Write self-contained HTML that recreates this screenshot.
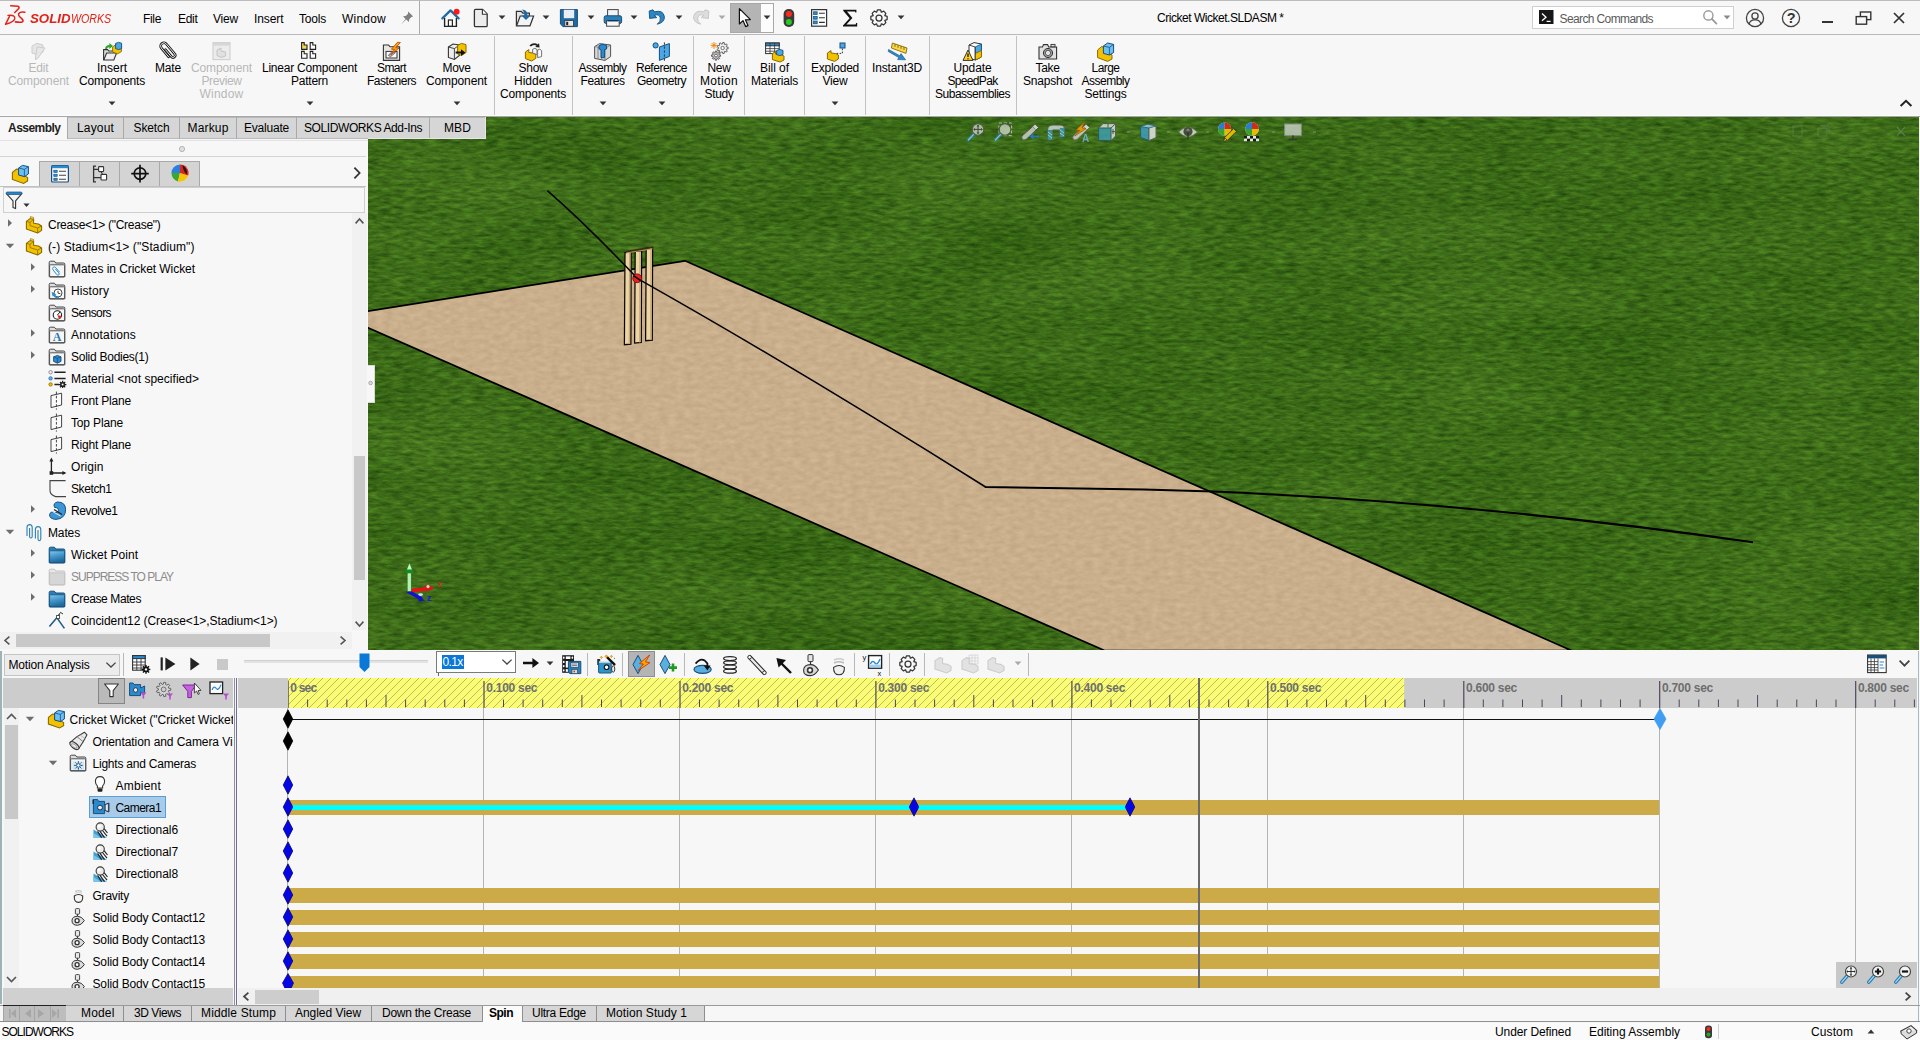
<!DOCTYPE html>
<html lang="en"><head><meta charset="utf-8"><title>Cricket Wicket.SLDASM - SOLIDWORKS</title>
<style>
html,body{margin:0;padding:0;}
body{width:1920px;height:1040px;overflow:hidden;background:#f7f7f7;position:relative;font-family:"Liberation Sans",sans-serif;}
#app{position:absolute;left:0;top:0;width:1920px;height:1040px;overflow:hidden;}
#app div,#app svg,#app span{position:absolute;}
.t{white-space:nowrap;display:block;}
</style></head><body><div id="app">
<div style="left:0px;top:0px;width:1920px;height:35px;background:#f7f7f7;"></div>
<div style="left:0px;top:0px;width:1920px;height:1px;background:#bcbcbc;"></div>
<div style="left:0px;top:34px;width:1920px;height:1px;background:#b9b9b9;"></div>
<div style="left:0px;top:35px;width:1920px;height:81px;background:#f7f7f7;"></div>
<div style="left:0px;top:115px;width:1920px;height:1px;background:#fcfcfc;"></div>
<div style="left:0px;top:116px;width:1920px;height:1px;background:#a6a6a6;"></div>
<div style="left:0px;top:117px;width:368px;height:533px;background:#f7f7f7;"></div>
<div style="left:0px;top:650px;width:1920px;height:354px;background:#f7f7f7;"></div>
<div style="left:0px;top:1004px;width:1920px;height:36px;background:#f7f7f7;"></div>
<svg style="left:368px;top:117px;" width="1551" height="533" viewBox="0 0 1551 533">
<defs>
<filter id="grassf" x="0" y="0" width="100%" height="100%" color-interpolation-filters="sRGB">
<feTurbulence type="fractalNoise" baseFrequency="0.085 0.3" numOctaves="4" seed="7" result="hi"/>
<feColorMatrix in="hi" type="matrix" values="0.23 0.05 0 0 0.095  0.32 0.04 0 0 0.236  0.10 0.03 0 0 0.029  0 0 0 0 1" result="hic"/>
<feTurbulence type="fractalNoise" baseFrequency="0.006 0.02" numOctaves="2" seed="3" result="lo"/>
<feColorMatrix in="lo" type="matrix" values="1 0 0 0 0  1 0 0 0 0  0.6 0 0 0 0.2  0 0 0 0 1" result="loc"/>
<feComposite in="hic" in2="loc" operator="arithmetic" k1="0" k2="1" k3="0.10" k4="-0.05"/>
</filter>
<filter id="sandf" x="0" y="0" width="100%" height="100%" color-interpolation-filters="sRGB">
<feTurbulence type="fractalNoise" baseFrequency="0.12 0.22" numOctaves="2" seed="11"/>
<feColorMatrix type="matrix" values="0.10 0 0 0 0.738  0.10 0 0 0 0.636  0.10 0 0 0 0.499  0 0 0 0 1"/>
</filter>
<clipPath id="pitchclip"><polygon points="-38.0,200.2 317.0,143.8 1203.5,533.5 736.5,533.5 0.0,210.7 -28.0,198.5"/></clipPath>
</defs>
<rect x="0" y="0" width="1551" height="533" fill="#3c6a18"/>
<rect x="0" y="0" width="1551" height="533" filter="url(#grassf)"/>
<g clip-path="url(#pitchclip)"><rect x="0" y="120" width="1260" height="413" fill="#c9af8c"/><rect x="0" y="120" width="1260" height="413" filter="url(#sandf)"/></g>
<polygon points="-38.0,200.2 317.0,143.8 1203.5,533.5 736.5,533.5 0.0,210.7 -28.0,198.5" fill="none" stroke="#000" stroke-width="1.75"/>
<path d="M278.2,131.0 L284.6,130.4 L284.3,223.1 L277.6,223.7 Z" fill="#ecd4a4" stroke="#0c0804" stroke-width="1.25"/><path d="M283.0,131.0 L282.7,223.1" stroke="#c8a878" stroke-width="1.2"/><path d="M267.2,134.4 L273.6,133.8 L273.3,225.4 L266.6,226.0 Z" fill="#ecd4a4" stroke="#0c0804" stroke-width="1.25"/><path d="M272.0,134.4 L271.7,225.4" stroke="#c8a878" stroke-width="1.2"/><path d="M257.0,135.6 L263.2,135.0 L262.9,227.1 L256.4,227.7 Z" fill="#ecd4a4" stroke="#0c0804" stroke-width="1.25"/><path d="M261.6,135.6 L261.3,227.1" stroke="#c8a878" stroke-width="1.2"/><path d="M258.0,134.6 L284.6,130.4" stroke="#3a2c18" stroke-width="1.8"/><path d="M258.0,136.0 L284.6,131.8" stroke="#b89868" stroke-width="1"/><path d="M179.4,73.6 Q222.0,111.0 269.2,161.3 Q432.0,253.0 617.6,370.0" fill="none" stroke="#000" stroke-width="1.5"/><path d="M617.1,369.7 L617.6,370.0 L776.0,372.6 L845.5,374.6 Q1112.0,386.0 1385.0,425.3" fill="none" stroke="#000" stroke-width="2" stroke-linejoin="miter"/><circle cx="269.2" cy="161.3" r="4.4" fill="#e32424" stroke="#8a0a0a" stroke-width="0.9"/><path d="M265.4,158.6 L273.2,163.8" stroke="#000" stroke-width="1.6"/><g>
<path d="M40.6,474.0 L63.0,471.2" stroke="#ee1010" stroke-width="3.4" stroke-linecap="round"/>
<path d="M57.0,467.6 L66.6,470.6 L58.0,474.8 Z" fill="#d81818"/>
<circle cx="60" cy="469.6" r="1.6" fill="#ffd0d0"/>
<path d="M40.4,474.6 L53.0,481.4" stroke="#1010d8" stroke-width="3.4" stroke-linecap="round"/>
<path d="M49.6,479.0 L57.0,483.4 L51.0,484.4 Z" fill="#1010d0"/>
<ellipse cx="52.60000000000002" cy="477.6" rx="2.4" ry="1.4" fill="#e0d8ff"/>
<rect x="39.19999999999999" y="456" width="4" height="18.4" fill="#b4f0b4" stroke="#1a6a1a" stroke-width="0.5"/>
<path d="M41.4,445.6 L46.2,456.0 L36.8,456.0 Z" fill="#178a17"/>
<path d="M41.4,446.4 L44.0,452.6 L39.0,452.6 Z" fill="#c8f4c8"/>
</g><text x="69.5" y="470" font-family="Liberation Sans,sans-serif" font-size="8.5" fill="#e01818">x</text><text x="59" y="483.6" font-family="Liberation Sans,sans-serif" font-size="8.5" font-weight="bold" fill="#1818d8">z</text></svg>
<div style="left:1919px;top:117px;width:1px;height:533px;background:#f7f7f7;"></div>
<svg style="left:965px;top:121px;opacity:0.8;" width="22" height="22" viewBox="0 0 22 22"><path d="M9.6,12.4 L3.4,19" stroke="#2a7fb8" stroke-width="3.2" stroke-linecap="round"/><path d="M9.6,12.4 L3.4,19" stroke="#9cd8f6" stroke-width="1.1" stroke-linecap="round"/><circle cx="13" cy="8.4" r="5.8" fill="#dfe8dc" fill-opacity="0.85" stroke="#555" stroke-width="1.1"/><path d="M13,4.6 V12.2 M9.2,8.4 H16.8" stroke="#333" stroke-width="0.9"/><path d="M13,3.6 l-1.4,1.8 h2.8 Z M13,13.2 l-1.4,-1.8 h2.8 Z M8.2,8.4 l1.8,-1.4 v2.8 Z M17.8,8.4 l-1.8,-1.4 v2.8 Z" fill="#333"/></svg>
<svg style="left:992px;top:121px;opacity:0.8;" width="22" height="22" viewBox="0 0 22 22"><rect x="7" y="2" width="12.6" height="12.6" fill="none" stroke="#c8d4c0" stroke-width="1" stroke-dasharray="3 2"/><path d="M9.6,12.4 L3.4,19" stroke="#2a7fb8" stroke-width="3.2" stroke-linecap="round"/><path d="M9.6,12.4 L3.4,19" stroke="#9cd8f6" stroke-width="1.1" stroke-linecap="round"/><circle cx="13" cy="8.4" r="5.8" fill="#dfe8dc" fill-opacity="0.85" stroke="#555" stroke-width="1.1"/></svg>
<svg style="left:1019px;top:121px;opacity:0.8;" width="22" height="22" viewBox="0 0 22 22"><path d="M3,15 L13.6,5.6 L17,9 L7,18.6 Q4.6,19.6 3.4,18.4 Q2.2,17 3,15 Z" fill="#d4d8d0" stroke="#555" stroke-width="1"/><path d="M13.6,5.6 L16,3 L19.6,6.4 L17,9" fill="#eee" stroke="#555" stroke-width="1"/><path d="M20,14.4 H14.6 V12 L10.4,15.4 L14.6,18.8 V16.4 H20 Z" fill="#2a7fd0"/></svg>
<svg style="left:1045px;top:121px;opacity:0.8;" width="22" height="22" viewBox="0 0 22 22"><path d="M2.6,9 Q2.6,4 8,4 L16,4 Q19.6,4 19.6,8 L19.6,16 L14.6,16 L14.6,9 L7.6,9 L7.6,19 L2.6,19 Z" fill="#cfd8d4" stroke="#4a5a5a" stroke-width="1"/><path d="M2.8,9 h4.6 v10 h-4.6 Z M14.8,7 h4.6 v9 h-4.6 Z" fill="#3a9ab8"/><path d="M3,11 l4,3 M3,14 l4,3 M15,9 l4,3 M15,12 l4,3" stroke="#cfeaf2" stroke-width="0.9"/></svg>
<svg style="left:1070px;top:121px;opacity:0.8;" width="22" height="22" viewBox="0 0 22 22"><path d="M3,15 L13.6,5.6 L17,9 L7,18.6 Q4.6,19.6 3.4,18.4 Q2.2,17 3,15 Z" fill="#d8d8d0" stroke="#666" stroke-width="1"/><path d="M13.6,5.6 L16,3 L19.6,6.4 L17,9" fill="#eee" stroke="#666" stroke-width="1"/><path d="M14.6,1 L6,9 L10,9.4 L4.6,15 L16,7.6 L12,7 Z" fill="#f5b000" stroke="#d04a00" stroke-width="0.8"/><text x="12" y="21" font-family="Liberation Sans,sans-serif" font-weight="bold" font-size="10" fill="#7ab6e0">A</text></svg>
<svg style="left:1096px;top:121px;opacity:0.8;" width="22" height="22" viewBox="0 0 22 22"><path d="M2.6,7 L7,2.6 L19.6,2.6 L19.6,15 L15,19.6 L2.6,19.6 Z" fill="#dde8dc" stroke="#556" stroke-width="1"/><rect x="2.6" y="7" width="12.4" height="12.6" fill="#3fa0b4" stroke="#245a6a" stroke-width="1"/><path d="M15,7 L19.6,2.6 M12,3 V6.6 M17,8 V13 M15.6,10.6 H19" stroke="#445" stroke-width="0.9"/></svg>
<svg style="left:1137px;top:121px;opacity:0.8;" width="22" height="22" viewBox="0 0 22 22"><path d="M3.6,5.6 L12,3 L12,19.6 L3.6,16.4 Z" fill="#3fa0c8" stroke="#1f5a7a" stroke-width="1"/><path d="M12,3 L19,5 L19,16.6 L12,19.6 Z" fill="#f0f0ec" stroke="#667" stroke-width="1"/><path d="M3.6,5.6 L10.6,3.2 L19,5 L12,7 Z" fill="#9cd4ec" stroke="#1f5a7a" stroke-width="0.8"/></svg>
<svg style="left:1177px;top:121px;opacity:0.8;" width="22" height="22" viewBox="0 0 22 22"><path d="M1.6,11 Q11,1.6 20.4,11 Q11,20.4 1.6,11 Z" fill="#e4e4e0" stroke="#777" stroke-width="0.8"/><circle cx="11" cy="10.6" r="4.6" fill="#4a4a46"/><path d="M11,10 V18.6" stroke="#2a2a2a" stroke-width="1.2"/><circle cx="11" cy="9" r="1.6" fill="#888"/></svg>
<svg style="left:1216px;top:121px;opacity:0.9;" width="22" height="22" viewBox="0 0 22 22"><circle cx="8.6" cy="8" r="6.6" fill="#e8e8e8"/><path d="M8.6,8 L8.6,1.4000000000000004 A6.6,6.6 0 0 0 2.0,8 Z" fill="#2a7fe0"/><path d="M8.6,8 L2.0,8 A6.6,6.6 0 0 0 8.6,14.6 Z" fill="#3aa82e"/><path d="M8.6,8 L8.6,14.6 A6.6,6.6 0 0 0 15.2,8 Z" fill="#f7c600"/><path d="M8.6,8 L15.2,8 A6.6,6.6 0 0 0 8.6,1.4000000000000004 Z" fill="#e0261c"/><path d="M17.6,7.6 L20.4,10.4 L11.4,19.4 L7.6,20.6 L8.6,16.6 Z" fill="#f2c200" stroke="#333" stroke-width="0.9"/><path d="M8.6,16.6 L11.4,19.4" stroke="#333" stroke-width="0.8"/></svg>
<svg style="left:1241px;top:121px;opacity:0.9;" width="22" height="22" viewBox="0 0 22 22"><circle cx="11" cy="8" r="6.8" fill="#e8e8e8"/><path d="M11,8 L11,1.2000000000000002 A6.8,6.8 0 0 0 4.2,8 Z" fill="#2a7fe0"/><path d="M11,8 L4.2,8 A6.8,6.8 0 0 0 11,14.8 Z" fill="#3aa82e"/><path d="M11,8 L11,14.8 A6.8,6.8 0 0 0 17.8,8 Z" fill="#f7c600"/><path d="M11,8 L17.8,8 A6.8,6.8 0 0 0 11,1.2000000000000002 Z" fill="#e0261c"/><g fill="#111"><rect x="3" y="15" width="3" height="2.6"/><rect x="9" y="15" width="3" height="2.6"/><rect x="15" y="15" width="3" height="2.6"/><rect x="6" y="17.6" width="3" height="2.6"/><rect x="12" y="17.6" width="3" height="2.6"/></g><g fill="#f4f4f4"><rect x="6" y="15" width="3" height="2.6"/><rect x="12" y="15" width="3" height="2.6"/><rect x="3" y="17.6" width="3" height="2.6"/><rect x="9" y="17.6" width="3" height="2.6"/><rect x="15" y="17.6" width="3" height="2.6"/></g></svg>
<svg style="left:1282px;top:121px;opacity:0.85;" width="22" height="22" viewBox="0 0 22 22"><rect x="2.6" y="3" width="16.8" height="11.6" fill="#c4ccc0" stroke="#8a9488" stroke-width="1"/><path d="M11,14.6 V18 M6.6,18.6 H15.4" stroke="#333" stroke-width="1.6"/></svg>
<svg style="left:1790px;top:123px;" width="120" height="16" viewBox="0 0 120 16"><g fill="none" stroke="#6a8a62" stroke-width="1" opacity="0.5"><rect x="3" y="3" width="9" height="10"/><path d="M28,5 h9 v8 h-9 Z M30,3 h9 v8"/><path d="M55,13 h9"/><path d="M107,4 l8,9 M115,4 l-8,9" stroke="#7a9a70" stroke-width="1.2"/></g></svg>
<div style="left:1126.5px;top:131px;width:3px;height:2px;background:rgba(160,170,160,0.35);"></div>
<div style="left:1166.5px;top:131px;width:3px;height:2px;background:rgba(160,170,160,0.35);"></div>
<div style="left:1205.5px;top:131px;width:3px;height:2px;background:rgba(160,170,160,0.35);"></div>
<div style="left:1271.5px;top:131px;width:3px;height:2px;background:rgba(160,170,160,0.35);"></div>
<div style="left:1312.5px;top:131px;width:3px;height:2px;background:rgba(160,170,160,0.35);"></div>
<svg style="left:0px;top:0px;" width="30" height="36" viewBox="0 0 480 576"><g fill="none" stroke="#e0231a" stroke-linecap="round" stroke-linejoin="round">
<path d="M172,93 L285,101 Q318,108 296,140 L236,200" stroke-width="25"/>
<path d="M128,246 Q250,232 236,300 Q222,352 88,390 L152,262" stroke-width="23"/>
<path d="M398,196 Q322,184 300,218 Q286,252 340,290 Q378,322 364,346 Q338,366 246,350" stroke-width="25"/></g></svg>
<span class="t" style="left:30.30px;top:10.50px;font-size:12.3px;line-height:16px;letter-spacing:0.000px;color:#e0231a;font-weight:bold;font-style:italic;transform:scaleX(1.0802);transform-origin:0 50%;">SOLID</span>
<span class="t" style="left:71.40px;top:10.50px;font-size:12.3px;line-height:16px;letter-spacing:0.000px;color:#e0231a;font-style:italic;transform:scaleX(0.8651);transform-origin:0 50%;">WORKS</span>
<span class="t" style="left:143.00px;top:10.50px;font-size:12px;line-height:16px;letter-spacing:-0.334px;color:#000;">File</span>
<span class="t" style="left:178.00px;top:10.50px;font-size:12px;line-height:16px;letter-spacing:-0.294px;color:#000;">Edit</span>
<span class="t" style="left:213.00px;top:10.50px;font-size:12px;line-height:16px;letter-spacing:-0.198px;color:#000;">View</span>
<span class="t" style="left:254.00px;top:10.50px;font-size:12px;line-height:16px;letter-spacing:-0.085px;color:#000;">Insert</span>
<span class="t" style="left:299.00px;top:10.50px;font-size:12px;line-height:16px;letter-spacing:-0.202px;color:#000;">Tools</span>
<span class="t" style="left:342.00px;top:10.50px;font-size:12px;line-height:16px;letter-spacing:0.220px;color:#000;">Window</span>
<svg style="left:399px;top:10px;" width="16" height="16" viewBox="0 0 16 16"><path d="M9.2,1.6 L14.2,6.6 L12.4,7 L10.2,9.2 L10,12 L7.2,9.6 L2,14.6 L6.6,9 L4,6.2 L6.8,6 L9,3.8 Z" fill="#808080"/></svg>
<div style="left:419px;top:1px;width:1px;height:33px;background:#ababab;"></div>
<svg style="left:441px;top:8px;" width="20" height="20" viewBox="0 0 20 20"><path d="M3.6,10 L3.6,18.4 L15.4,18.4 L15.4,10" fill="#fff" stroke="#222" stroke-width="1.4"/>
<path d="M1.4,10.4 L9.5,2.4 L17.6,10.4" fill="none" stroke="#1f6aa5" stroke-width="2.2" stroke-linecap="round" stroke-linejoin="round"/>
<rect x="7.4" y="12" width="4" height="6.2" fill="#fff" stroke="#222" stroke-width="1.2"/>
<circle cx="15.6" cy="3.8" r="3" fill="#ff1a1a"/></svg>
<svg style="left:473px;top:8px;" width="16" height="20" viewBox="0 0 16 20"><path d="M1.4,2.6 Q1.4,1.4 2.6,1.4 L9.6,1.4 L14.2,6 L14.2,17.4 Q14.2,18.6 13,18.6 L2.6,18.6 Q1.4,18.6 1.4,17.4 Z" fill="#ececec" stroke="#333" stroke-width="1.3"/>
<path d="M9.4,1.6 L9.4,6.2 L14,6.2" fill="#fff" stroke="#333" stroke-width="1.1"/></svg>
<svg style="left:498px;top:15px;" width="8" height="5" viewBox="0 0 8 5"><path d="M0.6,0.5 L7.4,0.5 L4,4.2 Z" fill="#333"/></svg>
<svg style="left:515px;top:8px;" width="20" height="20" viewBox="0 0 20 20"><path d="M1.4,17.8 L1.4,3.4 L6.4,3.4 L7.8,5.2 L14.4,5.2 L14.4,8" fill="#e4e4e4" stroke="#333" stroke-width="1.2"/>
<path d="M1.6,17.8 L5.2,8 L18.6,8 L15,17.8 Z" fill="#f4f4f4" stroke="#333" stroke-width="1.2"/>
<path d="M7,1.4 Q12.6,1.6 12.4,7.4 L15.6,7.4 L11,12 L6.4,7.4 L9.4,7.4 Q9.6,3.8 7,1.4 Z" fill="#1f6aa5"/></svg>
<svg style="left:542px;top:15px;" width="8" height="5" viewBox="0 0 8 5"><path d="M0.6,0.5 L7.4,0.5 L4,4.2 Z" fill="#333"/></svg>
<svg style="left:559px;top:8px;" width="20" height="20" viewBox="0 0 20 20"><path d="M1.4,1.6 L18.4,1.6 L18.4,18.6 L4,18.6 L1.4,16 Z" fill="#1f6aa5" stroke="#174f7c" stroke-width="1"/>
<rect x="4.8" y="1.8" width="10.4" height="8.4" fill="#e8eef4"/>
<rect x="5.8" y="12.6" width="8.6" height="5.6" fill="#e8e8e8" stroke="#333" stroke-width="0.8"/>
<rect x="7.2" y="13.8" width="2" height="3.4" fill="#222"/></svg>
<svg style="left:586.5px;top:15px;" width="8" height="5" viewBox="0 0 8 5"><path d="M0.6,0.5 L7.4,0.5 L4,4.2 Z" fill="#333"/></svg>
<svg style="left:603px;top:8px;" width="20" height="20" viewBox="0 0 20 20"><rect x="4.6" y="1.6" width="10.6" height="7" fill="#f4f4f4" stroke="#444" stroke-width="1"/>
<rect x="1.2" y="7.8" width="17.4" height="7.6" rx="1.6" fill="#2a7fb8" stroke="#174f7c" stroke-width="1"/>
<rect x="3.6" y="12.6" width="12.6" height="5.6" fill="#f8f8f8" stroke="#444" stroke-width="1"/>
<rect x="4.6" y="12" width="10.6" height="1.4" fill="#0d3a5c"/></svg>
<svg style="left:630px;top:15px;" width="8" height="5" viewBox="0 0 8 5"><path d="M0.6,0.5 L7.4,0.5 L4,4.2 Z" fill="#333"/></svg>
<svg style="left:647px;top:8px;" width="20" height="20" viewBox="0 0 20 20"><path d="M2.2,3 L2.6,10.4 L9.8,9.6 L7.2,7.6 Q12,5.2 13.4,10 Q14,13.4 10.2,16.2 Q17.8,14.6 17.4,8.6 Q16,1.6 7.6,3.8 L6,1.8 Z" fill="#2b86c5" stroke="#174f7c" stroke-width="0.9" stroke-linejoin="round"/></svg>
<svg style="left:674.5px;top:15px;" width="8" height="5" viewBox="0 0 8 5"><path d="M0.6,0.5 L7.4,0.5 L4,4.2 Z" fill="#333"/></svg>
<svg style="left:691px;top:8px;" width="20" height="20" viewBox="0 0 20 20"><path d="M17.8,3 L17.4,10.4 L10.2,9.6 L12.8,7.6 Q8,5.2 6.6,10 Q6,13.4 9.8,16.2 Q2.2,14.6 2.6,8.6 Q4,1.6 12.4,3.8 L14,1.8 Z" fill="#dcdcdc" stroke="#c4c4c4" stroke-width="0.9" stroke-linejoin="round"/></svg>
<svg style="left:718px;top:15px;" width="8" height="5" viewBox="0 0 8 5"><path d="M0.6,0.5 L7.4,0.5 L4,4.2 Z" fill="#aaa"/></svg>
<div style="left:730px;top:3px;width:44px;height:30px;background:#fcfcfc;border:1px solid #a8a8a8;box-sizing:border-box;"></div>
<div style="left:731px;top:4px;width:30px;height:28px;background:#b4b4b4;"></div>
<svg style="left:737px;top:7px;" width="16" height="22" viewBox="0 0 16 22"><path d="M2.4,1.6 L2.4,17 L6,13.6 L8.6,19.6 L11,18.6 L8.4,12.8 L13.4,12.6 Z" fill="#fff" stroke="#111" stroke-width="1.2" stroke-linejoin="round"/></svg>
<svg style="left:762.5px;top:15px;" width="8" height="5" viewBox="0 0 8 5"><path d="M0.6,0.5 L7.4,0.5 L4,4.2 Z" fill="#333"/></svg>
<svg style="left:782px;top:8px;" width="14" height="20" viewBox="0 0 14 20"><rect x="1.6" y="1" width="10.6" height="18" rx="5" fill="#3a3a3a"/>
<circle cx="6.9" cy="6" r="3" fill="#ff2a1a"/><circle cx="6.9" cy="14" r="3" fill="#22cc22"/></svg>
<svg style="left:810px;top:8px;" width="18" height="20" viewBox="0 0 18 20"><rect x="1.6" y="1.6" width="15" height="16.6" fill="#fbfbfb" stroke="#333" stroke-width="1.2"/>
<g fill="#2a8ad0" stroke="#174f7c" stroke-width="0.7"><rect x="3.6" y="3.8" width="3.6" height="2.8"/><rect x="3.6" y="8.4" width="3.6" height="2.8"/><rect x="3.6" y="13" width="3.6" height="2.8"/></g>
<g stroke="#333" stroke-width="1.1"><path d="M9,5.2 H14.8 M9,9.8 H14.8 M9,14.4 H14.8"/></g></svg>
<svg style="left:841px;top:8px;" width="18" height="20" viewBox="0 0 18 20"><path d="M2.2,1.8 L15.4,1.8 L15.4,4.6 L14.4,4.6 L14,3.6 L6,3.6 L11.4,10 L5.4,16.6 L14.6,16.6 L15.2,15 L16.2,15 L16.2,18.6 L2,18.6 L2,17.6 L8.6,10.2 L2.2,2.8 Z" fill="#111"/></svg>
<svg style="left:870px;top:9px;" width="18" height="18" viewBox="0 0 18 18"><path d="M17.15,7.43 L17.15,10.57 L14.83,11.40 L14.81,11.43 L15.87,13.65 L13.65,15.87 L11.43,14.81 L11.40,14.83 L10.57,17.15 L7.43,17.15 L6.60,14.83 L6.57,14.81 L4.35,15.87 L2.13,13.65 L3.19,11.43 L3.17,11.40 L0.85,10.57 L0.85,7.43 L3.17,6.60 L3.19,6.57 L2.13,4.35 L4.35,2.13 L6.57,3.19 L6.60,3.17 L7.43,0.85 L10.57,0.85 L11.40,3.17 L11.43,3.19 L13.65,2.13 L15.87,4.35 L14.81,6.57 L14.83,6.60 Z" fill="none" stroke="#333" stroke-width="1.25" stroke-linejoin="round"/><circle cx="9" cy="9" r="3" fill="none" stroke="#333" stroke-width="1.25"/></svg>
<svg style="left:896.5px;top:15px;" width="8" height="5" viewBox="0 0 8 5"><path d="M0.6,0.5 L7.4,0.5 L4,4.2 Z" fill="#333"/></svg>
<span class="t" style="left:1157.00px;top:9.90px;font-size:12px;line-height:16px;letter-spacing:-0.472px;color:#000;">Cricket Wicket.SLDASM *</span>
<div style="left:1532px;top:6px;width:202px;height:23px;background:#fff;border:1px solid #cfcfcf;box-sizing:border-box;"></div>
<svg style="left:1539px;top:9.5px;" width="14.5" height="14.5" viewBox="0 0 14.5 14.5"><rect width="14.5" height="14.5" fill="#161616"/><path d="M3,3.6 L7,7.2 L3,10.8 M7.6,11.4 H11.6" fill="none" stroke="#fff" stroke-width="1.3"/></svg>
<span class="t" style="left:1559.50px;top:10.50px;font-size:12px;line-height:16px;letter-spacing:-0.614px;color:#5a5a5a;">Search Commands</span>
<svg style="left:1702px;top:9px;" width="16" height="16" viewBox="0 0 16 16"><circle cx="6.4" cy="6.4" r="4.6" fill="none" stroke="#9a9a9a" stroke-width="1.4"/><path d="M9.8,9.8 L14.4,14.6" stroke="#9a9a9a" stroke-width="1.8" stroke-linecap="round"/></svg>
<svg style="left:1723px;top:15px;" width="8" height="5" viewBox="0 0 8 5"><path d="M0.6,0.5 L7.4,0.5 L4,4.2 Z" fill="#888"/></svg>
<svg style="left:1745px;top:8px;" width="20" height="20" viewBox="0 0 20 20"><circle cx="10" cy="10" r="8.6" fill="none" stroke="#444" stroke-width="1.3"/><circle cx="10" cy="8" r="3.1" fill="none" stroke="#444" stroke-width="1.3"/>
<path d="M4.2,16 Q5,11.6 10,11.8 Q15,11.6 15.8,16" fill="none" stroke="#444" stroke-width="1.3"/></svg>
<svg style="left:1781px;top:8px;" width="20" height="20" viewBox="0 0 20 20"><circle cx="10" cy="10" r="8.6" fill="none" stroke="#444" stroke-width="1.3"/></svg>
<span class="t" style="left:1786.83px;top:10.40px;font-size:14.5px;line-height:16px;letter-spacing:-0.120px;color:#333;font-weight:bold;">?</span>
<div style="left:1822px;top:21.3px;width:10.5px;height:2.2px;background:#333;"></div>
<svg style="left:1855px;top:11px;" width="18" height="15" viewBox="0 0 18 15"><rect x="5.4" y="1" width="10.4" height="7.6" fill="none" stroke="#333" stroke-width="1.4"/><rect x="1.2" y="5.6" width="10.4" height="7.6" fill="#f7f7f7" stroke="#333" stroke-width="1.4"/></svg>
<svg style="left:1893px;top:12px;" width="12" height="12" viewBox="0 0 12 12"><path d="M1,1 L11,11 M11,1 L1,11" stroke="#333" stroke-width="1.7"/></svg>
<div style="left:494px;top:36px;width:1px;height:79px;background:#c2c2c2;"></div>
<div style="left:572px;top:36px;width:1px;height:79px;background:#c2c2c2;"></div>
<div style="left:693px;top:36px;width:1px;height:79px;background:#c2c2c2;"></div>
<div style="left:744px;top:36px;width:1px;height:79px;background:#c2c2c2;"></div>
<div style="left:804px;top:36px;width:1px;height:79px;background:#c2c2c2;"></div>
<div style="left:865px;top:36px;width:1px;height:79px;background:#c2c2c2;"></div>
<div style="left:929px;top:36px;width:1px;height:79px;background:#c2c2c2;"></div>
<div style="left:1016px;top:36px;width:1px;height:79px;background:#c2c2c2;"></div>
<span class="t" style="left:28.50px;top:60.00px;font-size:12px;line-height:16px;letter-spacing:-0.169px;color:#b8b8b8;">Edit</span>
<span class="t" style="left:8.00px;top:73.00px;font-size:12px;line-height:16px;letter-spacing:-0.115px;color:#b8b8b8;">Component</span>
<span class="t" style="left:97.00px;top:60.00px;font-size:12px;line-height:16px;letter-spacing:-0.002px;color:#000;">Insert</span>
<span class="t" style="left:79.00px;top:73.00px;font-size:12px;line-height:16px;letter-spacing:-0.203px;color:#000;">Components</span>
<svg style="left:108px;top:101px;" width="8" height="5" viewBox="0 0 8 5"><path d="M0.6,0.5 L7.4,0.5 L4,4.2 Z" fill="#333"/></svg>
<span class="t" style="left:155.00px;top:60.00px;font-size:12px;line-height:16px;letter-spacing:-0.169px;color:#000;">Mate</span>
<span class="t" style="left:191.00px;top:60.00px;font-size:12px;line-height:16px;letter-spacing:-0.115px;color:#b8b8b8;">Component</span>
<span class="t" style="left:201.50px;top:73.00px;font-size:12px;line-height:16px;letter-spacing:-0.383px;color:#b8b8b8;">Preview</span>
<span class="t" style="left:199.50px;top:86.00px;font-size:12px;line-height:16px;letter-spacing:0.220px;color:#b8b8b8;">Window</span>
<span class="t" style="left:262.00px;top:60.00px;font-size:12px;line-height:16px;letter-spacing:-0.233px;color:#000;">Linear Component</span>
<span class="t" style="left:291.00px;top:73.00px;font-size:12px;line-height:16px;letter-spacing:-0.241px;color:#000;">Pattern</span>
<svg style="left:305.5px;top:101px;" width="8" height="5" viewBox="0 0 8 5"><path d="M0.6,0.5 L7.4,0.5 L4,4.2 Z" fill="#333"/></svg>
<span class="t" style="left:377.00px;top:60.00px;font-size:12px;line-height:16px;letter-spacing:-0.600px;color:#000;">Smart</span>
<span class="t" style="left:367.00px;top:73.00px;font-size:12px;line-height:16px;letter-spacing:-0.483px;color:#000;">Fasteners</span>
<span class="t" style="left:442.50px;top:60.00px;font-size:12px;line-height:16px;letter-spacing:-0.335px;color:#000;">Move</span>
<span class="t" style="left:426.00px;top:73.00px;font-size:12px;line-height:16px;letter-spacing:-0.115px;color:#000;">Component</span>
<svg style="left:452.5px;top:101px;" width="8" height="5" viewBox="0 0 8 5"><path d="M0.6,0.5 L7.4,0.5 L4,4.2 Z" fill="#333"/></svg>
<span class="t" style="left:518.50px;top:60.00px;font-size:12px;line-height:16px;letter-spacing:-0.254px;color:#000;">Show</span>
<span class="t" style="left:514.00px;top:73.00px;font-size:12px;line-height:16px;letter-spacing:-0.004px;color:#000;">Hidden</span>
<span class="t" style="left:500.00px;top:86.00px;font-size:12px;line-height:16px;letter-spacing:-0.203px;color:#000;">Components</span>
<span class="t" style="left:578.50px;top:60.00px;font-size:12px;line-height:16px;letter-spacing:-0.502px;color:#000;">Assembly</span>
<span class="t" style="left:580.50px;top:73.00px;font-size:12px;line-height:16px;letter-spacing:-0.419px;color:#000;">Features</span>
<svg style="left:598.5px;top:101px;" width="8" height="5" viewBox="0 0 8 5"><path d="M0.6,0.5 L7.4,0.5 L4,4.2 Z" fill="#333"/></svg>
<span class="t" style="left:636.00px;top:60.00px;font-size:12px;line-height:16px;letter-spacing:-0.485px;color:#000;">Reference</span>
<span class="t" style="left:637.00px;top:73.00px;font-size:12px;line-height:16px;letter-spacing:-0.460px;color:#000;">Geometry</span>
<svg style="left:657.5px;top:101px;" width="8" height="5" viewBox="0 0 8 5"><path d="M0.6,0.5 L7.4,0.5 L4,4.2 Z" fill="#333"/></svg>
<span class="t" style="left:707.50px;top:60.00px;font-size:12px;line-height:16px;letter-spacing:-0.335px;color:#000;">New</span>
<span class="t" style="left:700.00px;top:73.00px;font-size:12px;line-height:16px;letter-spacing:0.331px;color:#000;">Motion</span>
<span class="t" style="left:704.50px;top:86.00px;font-size:12px;line-height:16px;letter-spacing:-0.337px;color:#000;">Study</span>
<span class="t" style="left:760.00px;top:60.00px;font-size:12px;line-height:16px;letter-spacing:-0.049px;color:#000;">Bill of</span>
<span class="t" style="left:751.00px;top:73.00px;font-size:12px;line-height:16px;letter-spacing:-0.186px;color:#000;">Materials</span>
<span class="t" style="left:811.00px;top:60.00px;font-size:12px;line-height:16px;letter-spacing:-0.255px;color:#000;">Exploded</span>
<span class="t" style="left:822.50px;top:73.00px;font-size:12px;line-height:16px;letter-spacing:-0.198px;color:#000;">View</span>
<svg style="left:831px;top:101px;" width="8" height="5" viewBox="0 0 8 5"><path d="M0.6,0.5 L7.4,0.5 L4,4.2 Z" fill="#333"/></svg>
<span class="t" style="left:872.00px;top:60.00px;font-size:12px;line-height:16px;letter-spacing:-0.151px;color:#000;">Instant3D</span>
<span class="t" style="left:953.50px;top:60.00px;font-size:12px;line-height:16px;letter-spacing:-0.115px;color:#000;">Update</span>
<span class="t" style="left:947.50px;top:73.00px;font-size:12px;line-height:16px;letter-spacing:-0.672px;color:#000;">SpeedPak</span>
<span class="t" style="left:935.00px;top:86.00px;font-size:12px;line-height:16px;letter-spacing:-0.490px;color:#000;">Subassemblies</span>
<span class="t" style="left:1035.50px;top:60.00px;font-size:12px;line-height:16px;letter-spacing:-0.337px;color:#000;">Take</span>
<span class="t" style="left:1023.00px;top:73.00px;font-size:12px;line-height:16px;letter-spacing:-0.213px;color:#000;">Snapshot</span>
<span class="t" style="left:1091.50px;top:60.00px;font-size:12px;line-height:16px;letter-spacing:-0.538px;color:#000;">Large</span>
<span class="t" style="left:1081.50px;top:73.00px;font-size:12px;line-height:16px;letter-spacing:-0.502px;color:#000;">Assembly</span>
<span class="t" style="left:1084.50px;top:86.00px;font-size:12px;line-height:16px;letter-spacing:-0.170px;color:#000;">Settings</span>
<svg style="left:1899px;top:99px;" width="14" height="9" viewBox="0 0 14 9"><path d="M1.6,7 L7,1.8 L12.4,7" fill="none" stroke="#222" stroke-width="2"/></svg>
<svg style="left:28px;top:41px;" width="22" height="22" viewBox="0 0 22 22"><g fill="#e6e6e6" stroke="#cdcdcd" stroke-width="1"><path d="M4,5 L9,2.4 L15,4 L15,11 L9.6,14 L4,12 Z"/><path d="M9,6 L17,7 L9.6,17.6 L7.4,18.6 L7.6,16 Z"/></g></svg>
<svg style="left:102px;top:41px;" width="22" height="22" viewBox="0 0 22 22"><path d="M1.6,19 L1.6,8.6 L5.6,8.6 L6.8,10 L11.6,10 L11.6,12" fill="#dcdcdc" stroke="#333" stroke-width="1.1"/>
<path d="M1.8,19 L4.6,12 L14.6,12 L11.8,19 Z" fill="#f0f0f0" stroke="#333" stroke-width="1.1"/>
<path d="M3,8 Q3.4,4 7.4,4 L7.4,2 L11,5 L7.4,8 L7.4,6.2 Q5.2,6 5,8 Z" fill="#2ea52e"/>
<path d="M10.6,6 L14,3.4 L19.4,4.4 L19.4,10.6 L15.6,12.8 L10.6,11 Z" fill="#f2c200" stroke="#8a6a00" stroke-width="0.9"/>
<path d="M13.6,2.4 L16.6,1.4 L19.6,2.2 L19.6,7.6 L16.6,8.6 L13.6,7.6 Z" fill="#49a8e8" stroke="#174f7c" stroke-width="0.9"/></svg>
<svg style="left:157px;top:41px;" width="22" height="22" viewBox="0 0 22 22"><g transform="translate(11.2,10.2) rotate(-40) scale(0.88)"><path d="M-1.3,-3.4 L-1.3,7 A2.5,2.5 0 0 0 3.7,7 L3.7,-7.6 A3.7,3.7 0 0 0 -3.7,-7.6 L-3.7,5.2" fill="none" stroke="#1e1e1e" stroke-width="3" stroke-linecap="round"/>
<path d="M-1.3,-3.4 L-1.3,7 A2.5,2.5 0 0 0 3.7,7 L3.7,-7.6 A3.7,3.7 0 0 0 -3.7,-7.6 L-3.7,5.2" fill="none" stroke="#f2f2f2" stroke-width="1" stroke-linecap="round"/></g></svg>
<svg style="left:211px;top:41px;" width="22" height="22" viewBox="0 0 22 22"><rect x="2" y="1.6" width="17" height="17" fill="#ececec" stroke="#cfcfcf" stroke-width="1.1"/><rect x="2" y="1.6" width="17" height="3" fill="#d6d6d6"/>
<path d="M6,9 L10,7 L10,10 L14.6,11 L14.6,15 L10.4,16.4 L6,14.6 Z" fill="#e0e0e0" stroke="#c4c4c4" stroke-width="1"/></svg>
<svg style="left:299px;top:41px;" width="22" height="22" viewBox="0 0 22 22"><path d="M2.6,1.6 h2.6 v2.4 h2.8 v4.4 h-5.4 Z" fill="#f7d64a" stroke="#222" stroke-width="1.1"/><path d="M11.2,1.6 h2.6 v2.4 h2.8 v4.4 h-5.4 Z" fill="#fff" stroke="#222" stroke-width="1.1"/><path d="M2.6,10.4 h2.6 v2.4 h2.8 v4.4 h-5.4 Z" fill="#fff" stroke="#222" stroke-width="1.1"/><path d="M11.2,10.4 h2.6 v2.4 h2.8 v4.4 h-5.4 Z" fill="#fff" stroke="#222" stroke-width="1.1"/></svg>
<svg style="left:381px;top:41px;" width="22" height="22" viewBox="0 0 22 22"><path d="M2.4,19.4 L2.4,4 L7.6,4 L9,5.8 L18.6,5.8 L18.6,19.4 Z" fill="#e6e6e6" stroke="#333" stroke-width="1.1"/>
<rect x="5" y="10.4" width="11" height="6.6" fill="#fafafa" stroke="#333" stroke-width="1"/>
<path d="M7.4,14.4 L11.4,10.2 L14.4,11.6 L9.6,15.6 Z" fill="#ccc" stroke="#444" stroke-width="0.8"/>
<path d="M16.6,1.2 L10.4,8.2 L13.6,8.4 L9.6,14 L18,7 L14.8,6.6 L19.4,1.6 Z" fill="#f5a800" stroke="#c23a00" stroke-width="0.8"/></svg>
<svg style="left:446px;top:41px;" width="22" height="22" viewBox="0 0 22 22"><path d="M2.4,6 L7,3 L13.4,4 L13.4,14.4 L8.4,18.4 L2.4,16.4 Z" fill="#ededed" stroke="#333" stroke-width="1.1"/><path d="M2.4,6 L8.4,7.6 L13.4,4 M8.4,7.6 L8.4,18.4" fill="none" stroke="#333" stroke-width="0.9"/>
<path d="M11.6,4.4 L15.4,2.4 L20,3.6 L20,11.6 L15.6,14.4 L11.6,13 Z" fill="#f2c200" stroke="#8a6a00" stroke-width="1"/>
<path d="M9.6,10.6 L15,10.6 L15,8.2 L19.4,11.6 L15,15 L15,12.6 L9.6,12.6 Z" fill="#111"/></svg>
<svg style="left:523px;top:41px;" width="22" height="22" viewBox="0 0 22 22"><path d="M6.4,4.4 Q10.6,0.6 15,3.6 L16,2 L16.6,6.6 L12.2,6 L13.6,4.8 Q10.6,3 7.8,5.6 Z" fill="#222"/>
<path d="M2.4,11 L5.8,8.6 L5.8,11.4 L10,12 L12.8,13.4 L12.8,17.4 L8.6,20 L2.4,17.6 Z" fill="#f2c200" stroke="#8a6a00" stroke-width="1"/>
<path d="M9.6,8.4 Q12,6 14,8.6 L14,13.6 L9.6,12 Z" fill="#f4f4f4" stroke="#666" stroke-width="0.9"/>
<path d="M14.6,9 Q17,7 18.6,9.6 L18.6,15.6 L14.6,16.6 Z" fill="#fafafa" stroke="#666" stroke-width="0.9"/></svg>
<svg style="left:592px;top:41px;" width="22" height="22" viewBox="0 0 22 22"><path d="M2.6,5.6 L7.6,2.6 L18.6,4 L18.6,15.6 L13,19.4 L2.6,17.4 Z" fill="#d8d8d8" stroke="#555" stroke-width="1"/>
<path d="M2.6,5.6 L13,7.4 L18.6,4 M13,7.4 L13,19.4 M6,6.2 L6,18 M9.6,6.8 L9.6,18.8" fill="none" stroke="#777" stroke-width="0.8"/>
<path d="M7,4.6 Q10.6,2 14.6,4.4 L14.6,8 L12.6,8.6 L12.6,16.6 L9,16.6 L9,8.6 L7,8 Z" fill="#2a8ad0" stroke="#174f7c" stroke-width="1"/></svg>
<svg style="left:651px;top:41px;" width="22" height="22" viewBox="0 0 22 22"><path d="M8.4,6 L18.4,2.6 L18.4,15.4 L8.4,19.4 Z" fill="#49a8e8" stroke="#174f7c" stroke-width="1"/>
<path d="M13.4,1.4 L13.4,20.6" stroke="#333" stroke-width="1" stroke-dasharray="2.4 1.6"/>
<circle cx="4.6" cy="4.4" r="2.6" fill="#49a8e8" stroke="#174f7c" stroke-width="1"/></svg>
<svg style="left:709px;top:41px;" width="22" height="22" viewBox="0 0 22 22"><path d="M19.15,6.22 L19.15,7.78 L17.60,7.91 L17.25,8.87 L18.35,9.97 L17.35,11.16 L16.08,10.27 L15.19,10.78 L15.33,12.33 L13.80,12.60 L13.40,11.10 L12.39,10.92 L11.50,12.19 L10.15,11.41 L10.81,10.01 L10.15,9.22 L8.66,9.63 L8.12,8.16 L9.53,7.51 L9.53,6.49 L8.12,5.84 L8.66,4.37 L10.15,4.78 L10.81,3.99 L10.15,2.59 L11.50,1.81 L12.39,3.08 L13.40,2.90 L13.80,1.40 L15.33,1.67 L15.19,3.22 L16.08,3.73 L17.35,2.84 L18.35,4.03 L17.25,5.13 L17.60,6.09 Z" fill="#f0f0f0" stroke="#555" stroke-width="0.9"/><circle cx="13.6" cy="7" r="1.7" fill="#fff" stroke="#555" stroke-width="0.8"/>
<path d="M11.54,13.88 L11.54,15.32 L10.20,15.42 L9.84,16.28 L10.72,17.30 L9.70,18.32 L8.68,17.44 L7.82,17.80 L7.72,19.14 L6.28,19.14 L6.18,17.80 L5.32,17.44 L4.30,18.32 L3.28,17.30 L4.16,16.28 L3.80,15.42 L2.46,15.32 L2.46,13.88 L3.80,13.78 L4.16,12.92 L3.28,11.90 L4.30,10.88 L5.32,11.76 L6.18,11.40 L6.28,10.06 L7.72,10.06 L7.82,11.40 L8.68,11.76 L9.70,10.88 L10.72,11.90 L9.84,12.92 L10.20,13.78 Z" fill="#bdbdbd" stroke="#555" stroke-width="0.9"/><circle cx="7" cy="14.6" r="1.4" fill="#fff" stroke="#555" stroke-width="0.8"/>
<path d="M5,1 L5,8 M1.6,4.4 L8.4,4.4 M2.6,2 L7.4,6.8 M7.4,2 L2.6,6.8" stroke="#f08000" stroke-width="0.9"/></svg>
<svg style="left:764px;top:41px;" width="22" height="22" viewBox="0 0 22 22"><rect x="1.6" y="2" width="13.6" height="10.6" fill="#fff" stroke="#333" stroke-width="1"/><rect x="1.6" y="2" width="13.6" height="2.8" fill="#2a8ad0" stroke="#333" stroke-width="1"/>
<path d="M1.6,7.6 H15.2 M1.6,10.2 H15.2 M6,2 V12.6 M10.6,2 V12.6" stroke="#333" stroke-width="0.8" fill="none"/>
<path d="M8.4,12.6 L11.6,10.6 L11.6,13 L17,13.6 L20,15 L20,19 L16,21 L8.4,18.6 Z" fill="#f2c200" stroke="#8a6a00" stroke-width="1"/>
<path d="M12.6,9.6 L15.6,8.4 L19,9.4 L19,13.4 L15.8,14.6 L12.6,13.6 Z" fill="#49a8e8" stroke="#174f7c" stroke-width="0.9"/></svg>
<svg style="left:825px;top:41px;" width="22" height="22" viewBox="0 0 22 22"><path d="M2.4,12 L6,9.6 L6,12 L10.6,12.6 L13.4,14 L13.4,18 L9.6,20.4 L2.4,18 Z" fill="#f2c200" stroke="#8a6a00" stroke-width="1"/>
<rect x="15" y="2" width="5" height="5" fill="#49a8e8" stroke="#174f7c" stroke-width="1"/>
<path d="M17.4,7.6 L17.4,12.4 L11,12.4" fill="none" stroke="#333" stroke-width="1" stroke-dasharray="1.6 1.4"/></svg>
<svg style="left:887px;top:41px;" width="22" height="22" viewBox="0 0 22 22"><path d="M5.4,2 L20,7 L19,12.4 L4.4,7 Z" fill="#f7d64a" stroke="#8a6a00" stroke-width="0.9"/>
<path d="M8,3.2 v2.6 M11,4.2 v2.6 M14,5.2 v2.6 M17,6.2 v2.6" stroke="#6a5000" stroke-width="0.8"/>
<path d="M1.6,8.4 L12.8,14.8 L14,12.6 L18.6,18.8 L10.6,18.6 L11.8,16.6 L1.2,10.4 Z" fill="#2a8ad0" stroke="#174f7c" stroke-width="0.6"/></svg>
<svg style="left:962px;top:41px;" width="22" height="22" viewBox="0 0 22 22"><path d="M7,4 L12,1.6 L19.4,3 L19.4,16 L13.6,19 L7,17.4 Z" fill="#fdfdfd" stroke="#333" stroke-width="1"/>
<path d="M13.2,6 L19.4,3 L19.4,9.6 L13.2,12.6 Z" fill="#49a8e8" stroke="#174f7c" stroke-width="0.8"/><path d="M13.2,12.6 L19.4,9.6 L19.4,16 L13.2,19 Z" fill="#f2c200" stroke="#8a6a00" stroke-width="0.8"/>
<path d="M7,4 L13.2,6 L13.2,19" fill="none" stroke="#333" stroke-width="0.9"/>
<path d="M6,9 L11,19.4 L1,19.4 Z" fill="#ffd21a" stroke="#333" stroke-width="1" stroke-linejoin="round"/><path d="M6,12.4 V16 M6,17.2 V18.2" stroke="#111" stroke-width="1.3"/></svg>
<svg style="left:1037px;top:41px;" width="22" height="22" viewBox="0 0 22 22"><path d="M2,6 L5.4,6 L6.6,3.6 L10.6,3.6 L11.6,6 L19.6,6 L19.6,18 L2,18 Z" fill="#e2e2e2" stroke="#333" stroke-width="1.1"/>
<rect x="14" y="3.4" width="4" height="2.4" fill="#ddd" stroke="#333" stroke-width="0.9"/>
<circle cx="11" cy="12" r="4.6" fill="#9a9a9a" stroke="#333" stroke-width="1"/><circle cx="11" cy="12" r="2.6" fill="#e8e8e8" stroke="#444" stroke-width="0.8"/></svg>
<svg style="left:1095px;top:41px;" width="22" height="22" viewBox="0 0 22 22"><path d="M2.6,9 L6.6,5.6 L10,6.4 L10,11.6 L14,12 L17,14 L17,18 L12.6,20.4 L2.6,16.6 Z" fill="#f2c200" stroke="#8a6a00" stroke-width="1"/>
<path d="M8.4,5 L12.6,2 L18.6,3.4 L18.6,11.6 L14.4,14 L8.4,12.4 Z" fill="#6cc0f4" stroke="#174f7c" stroke-width="1"/><path d="M8.4,5 L14.4,6.4 L18.6,3.4 M14.4,6.4 L14.4,14" fill="none" stroke="#174f7c" stroke-width="0.8"/></svg>
<div style="left:67px;top:117px;width:419px;height:22px;background:#d6d6d6;"></div>
<div style="left:67px;top:117px;width:419px;height:1px;background:#b9b9b9;"></div>
<div style="left:67px;top:138px;width:419px;height:1px;background:#b9b9b9;"></div>
<div style="left:67px;top:117px;width:1px;height:22px;background:#a9a9a9;"></div>
<span class="t" style="left:77.00px;top:120.00px;font-size:12px;line-height:16px;letter-spacing:0.162px;color:#000;">Layout</span>
<div style="left:123px;top:117px;width:1px;height:22px;background:#a9a9a9;"></div>
<span class="t" style="left:133.50px;top:120.00px;font-size:12px;line-height:16px;letter-spacing:-0.114px;color:#000;">Sketch</span>
<div style="left:179px;top:117px;width:1px;height:22px;background:#a9a9a9;"></div>
<span class="t" style="left:187.50px;top:120.00px;font-size:12px;line-height:16px;letter-spacing:0.165px;color:#000;">Markup</span>
<div style="left:236px;top:117px;width:1px;height:22px;background:#a9a9a9;"></div>
<span class="t" style="left:244.00px;top:120.00px;font-size:12px;line-height:16px;letter-spacing:-0.212px;color:#000;">Evaluate</span>
<div style="left:296px;top:117px;width:1px;height:22px;background:#a9a9a9;"></div>
<span class="t" style="left:304.00px;top:120.00px;font-size:12px;line-height:16px;letter-spacing:-0.410px;color:#000;">SOLIDWORKS Add-Ins</span>
<div style="left:429px;top:117px;width:1px;height:22px;background:#a9a9a9;"></div>
<span class="t" style="left:444.00px;top:120.00px;font-size:12px;line-height:16px;letter-spacing:0.111px;color:#000;">MBD</span>
<div style="left:485px;top:117px;width:1px;height:22px;background:#e9e4e9;"></div>
<div style="left:368px;top:138px;width:118px;height:1px;background:#e9e4e9;"></div>
<span class="t" style="left:8.00px;top:120.00px;font-size:12px;line-height:16px;letter-spacing:-0.524px;color:#222;font-weight:bold;">Assembly</span>
<svg width="0" height="0" style="left:0;top:0;"><defs><linearGradient id="bfg" x1="0" y1="0" x2="0.3" y2="1"><stop offset="0" stop-color="#86c8ec"/><stop offset="0.55" stop-color="#3f93c6"/><stop offset="1" stop-color="#1f6a9c"/></linearGradient></defs></svg>
<div style="left:0px;top:140px;width:368px;height:1px;background:#e2e2e2;"></div>
<div style="left:0px;top:156px;width:366px;height:1px;background:#d4d4d4;"></div>
<svg style="left:178px;top:145px;" width="8" height="8" viewBox="0 0 8 8"><circle cx="4" cy="4" r="2.6" fill="#e0e0e0" stroke="#b4b4b4" stroke-width="1"/></svg>
<div style="left:39px;top:161px;width:161px;height:26px;background:#d4d4d4;border:1px solid #a9a9a9;box-sizing:border-box;"></div>
<div style="left:79px;top:161px;width:1px;height:26px;background:#a9a9a9;"></div>
<div style="left:119px;top:161px;width:1px;height:26px;background:#a9a9a9;"></div>
<div style="left:159px;top:161px;width:1px;height:26px;background:#a9a9a9;"></div>
<div style="left:0px;top:186px;width:366px;height:1px;background:#c0c0c0;"></div>
<svg style="left:11px;top:164px;" width="20" height="20" viewBox="0 0 20 20"><path d="M1.4,8.4 L5.6,5 L8.4,5.6 L8.4,11 L13,11.6 L16.6,13.6 L16.6,17 L12.6,19.4 L1.4,15.4 Z" fill="#f2c200" stroke="#8a6a00" stroke-width="1.1"/>
<path d="M7.6,4 L11.4,1.4 L17.4,2.6 L17.4,10 L13.4,12.6 L7.6,11 Z" fill="#6cc0f4" stroke="#174f7c" stroke-width="1"/><path d="M7.6,4 L13.4,5.4 L17.4,2.6 M13.4,5.4 L13.4,12.6" fill="none" stroke="#174f7c" stroke-width="0.8"/></svg>
<svg style="left:50px;top:164px;" width="20" height="20" viewBox="0 0 20 20"><rect x="1.6" y="1.6" width="16.8" height="16.4" rx="1" fill="#fbfbfb" stroke="#174f7c" stroke-width="1.2"/><rect x="1.6" y="1.6" width="16.8" height="2.6" fill="#2a8ad0"/>
<g fill="#2a8ad0" stroke="#174f7c" stroke-width="0.6"><rect x="3.8" y="6.2" width="3.4" height="2.2"/><rect x="3.8" y="10.2" width="3.4" height="2.2"/><rect x="3.8" y="14.2" width="3.4" height="2.2"/></g>
<path d="M9,7.3 H16 M9,11.3 H16 M9,15.3 H16" stroke="#444" stroke-width="1.1"/></svg>
<svg style="left:90px;top:164px;" width="20" height="20" viewBox="0 0 20 20"><path d="M3.6,1.6 L3.6,18.4 M3.6,2.2 L6,2.2 M3.6,17.8 L6,17.8 M3.6,5.4 L9,5.4 M3.6,13.6 L11,13.6" stroke="#333" stroke-width="1.3" fill="none"/>
<rect x="8.6" y="2.6" width="5" height="5" rx="0.8" fill="#fff" stroke="#333" stroke-width="1.1"/><rect x="11" y="10.4" width="5.6" height="5.6" rx="0.8" fill="#fff" stroke="#333" stroke-width="1.1"/><path d="M11,7.6 L12.6,10.4" stroke="#333" stroke-width="1"/></svg>
<svg style="left:130px;top:164px;" width="20" height="20" viewBox="0 0 20 20"><circle cx="10" cy="9.6" r="5.8" fill="none" stroke="#111" stroke-width="1.7"/><path d="M10,0.8 V18.4 M1.2,9.6 H18.8" stroke="#111" stroke-width="1.7"/></svg>
<svg style="left:170px;top:163px;" width="20" height="20" viewBox="0 0 20 20"><circle cx="10" cy="10" r="8.6" fill="#e8e8e8"/>
<path d="M10,10 L10,1.4 A8.6,8.6 0 0 0 1.4,10 Z" fill="#2a7fe0"/><path d="M10,10 L1.4,10 A8.6,8.6 0 0 0 8,18.4 Z" fill="#3aa82e"/>
<path d="M10,10 L8,18.4 A8.6,8.6 0 0 0 18.2,12.6 Z" fill="#f7c600"/><path d="M10,10 L18.2,12.6 A8.6,8.6 0 0 0 10,1.4 Z" fill="#e0261c"/>
<path d="M12.4,2 Q18,5.6 16.8,11.6 Q13,8 12.4,2 Z" fill="#1a1a1a"/></svg>
<svg style="left:352px;top:166px;" width="10" height="14" viewBox="0 0 10 14"><path d="M2.4,1.6 L7.6,7 L2.4,12.4" fill="none" stroke="#333" stroke-width="1.8"/></svg>
<div style="left:3px;top:187px;width:362px;height:26px;background:#f7f7f7;border:1px solid #d0d0d0;box-sizing:border-box;"></div>
<svg style="left:5px;top:191px;" width="20" height="20" viewBox="0 0 20 20"><path d="M1.4,2.6 L16.8,2.6 L10.6,9.8 L10.6,17.6 L8,16.4 L8,9.8 Z" fill="#f4f4f4" stroke="#333" stroke-width="1.1" stroke-linejoin="round"/><rect x="1.2" y="1" width="15.8" height="2.4" rx="1" fill="#2a8ad0" stroke="#174f7c" stroke-width="0.7"/></svg>
<svg style="left:23px;top:203px;" width="7" height="5" viewBox="0 0 7 5"><path d="M0.4,0.6 L6.6,0.6 L3.5,4 Z" fill="#333"/></svg>
<svg style="left:7px;top:218.1px;" width="6" height="10" viewBox="0 0 6 10"><path d="M1,1.2 L5,5 L1,8.8 Z" fill="#6e6e6e"/></svg>
<svg style="left:25px;top:214.5px;" width="19" height="19" viewBox="0 0 19 19"><path d="M1.4,6.4 L5.4,3.4 L8.6,4.2 L8.6,8.2 L13.4,9 L16.6,11 L16.6,15.4 L12.6,18 L1.4,14 Z" fill="#f2c200" stroke="#8a6a00" stroke-width="1.1" stroke-linejoin="round"/><path d="M1.4,6.4 L5,7.4 L8.6,4.2 M5,7.4 L5,10.6 L12.6,13 L16.6,11 M12.6,13 L12.6,18" fill="none" stroke="#8a6a00" stroke-width="0.8"/><path d="M5.4,1.6 L8.6,2.4 L8.6,4.2 L5.4,3.4 Z" fill="#ffe066" stroke="#8a6a00" stroke-width="0.6"/></svg>
<span class="t" style="left:48.00px;top:216.50px;font-size:12px;line-height:16px;letter-spacing:-0.270px;color:#000;">Crease&lt;1&gt; (&quot;Crease&quot;)</span>
<svg style="left:5px;top:242.6px;" width="10" height="6" viewBox="0 0 10 6"><path d="M0.8,0.8 L9.2,0.8 L5,5.2 Z" fill="#6e6e6e"/></svg>
<svg style="left:25px;top:236.5px;" width="19" height="19" viewBox="0 0 19 19"><path d="M1.4,6.4 L5.4,3.4 L8.6,4.2 L8.6,8.2 L13.4,9 L16.6,11 L16.6,15.4 L12.6,18 L1.4,14 Z" fill="#f2c200" stroke="#8a6a00" stroke-width="1.1" stroke-linejoin="round"/><path d="M1.4,6.4 L5,7.4 L8.6,4.2 M5,7.4 L5,10.6 L12.6,13 L16.6,11 M12.6,13 L12.6,18" fill="none" stroke="#8a6a00" stroke-width="0.8"/><path d="M5.4,1.6 L8.6,2.4 L8.6,4.2 L5.4,3.4 Z" fill="#ffe066" stroke="#8a6a00" stroke-width="0.6"/></svg>
<span class="t" style="left:48.00px;top:238.50px;font-size:12px;line-height:16px;letter-spacing:0.100px;color:#000;">(-) Stadium&lt;1&gt; (&quot;Stadium&quot;)</span>
<svg style="left:30px;top:262.1px;" width="6" height="10" viewBox="0 0 6 10"><path d="M1,1.2 L5,5 L1,8.8 Z" fill="#6e6e6e"/></svg>
<svg style="left:48px;top:258.5px;" width="19" height="19" viewBox="0 0 19 19"><g transform="translate(0,0.8)"><path d="M1.2,16.6 L1.2,2.6 Q1.2,1.4 2.4,1.4 L6.4,1.4 L7.8,3.2 L15.6,3.2 Q16.8,3.2 16.8,4.4 L16.8,16.6 Q16.8,17.2 16,17.2 L2,17.2 Q1.2,17.2 1.2,16.6 Z" fill="#dedede" stroke="#444" stroke-width="1"/><path d="M1.6,16.8 L1.6,5.8 Q1.6,5 2.6,5 L15.6,5 Q16.6,5 16.6,5.8 L16.6,16.8 Z" fill="#f6f6f6" stroke="#444" stroke-width="0.9"/><path d="M7.4,9.2 L10.8,13 Q11.8,14.4 10.6,15.2 Q9.6,15.8 8.6,14.6 L5,10 Q4,8.4 5.4,7.4 Q6.6,6.6 7.8,8 L11.6,12.4" fill="none" stroke="#2a8ad0" stroke-width="1"/></g></svg>
<span class="t" style="left:71.00px;top:260.50px;font-size:12px;line-height:16px;letter-spacing:-0.059px;color:#000;">Mates in Cricket Wicket</span>
<svg style="left:30px;top:284.1px;" width="6" height="10" viewBox="0 0 6 10"><path d="M1,1.2 L5,5 L1,8.8 Z" fill="#6e6e6e"/></svg>
<svg style="left:48px;top:280.5px;" width="19" height="19" viewBox="0 0 19 19"><g transform="translate(0,0.8)"><path d="M1.2,16.6 L1.2,2.6 Q1.2,1.4 2.4,1.4 L6.4,1.4 L7.8,3.2 L15.6,3.2 Q16.8,3.2 16.8,4.4 L16.8,16.6 Q16.8,17.2 16,17.2 L2,17.2 Q1.2,17.2 1.2,16.6 Z" fill="#dedede" stroke="#444" stroke-width="1"/><path d="M1.6,16.8 L1.6,5.8 Q1.6,5 2.6,5 L15.6,5 Q16.6,5 16.6,5.8 L16.6,16.8 Z" fill="#f6f6f6" stroke="#444" stroke-width="0.9"/><circle cx="10" cy="11.2" r="4" fill="#fff" stroke="#333" stroke-width="0.9"/><path d="M10,9 V11.4 L12.4,12" stroke="#333" stroke-width="0.9" fill="none"/><path d="M3.6,10 L4.6,14.6 L8.4,12.6 Z" fill="#2a8ad0"/><path d="M5.6,12.8 Q7,16.4 11,15.8" stroke="#2a8ad0" stroke-width="1.4" fill="none"/></g></svg>
<span class="t" style="left:71.00px;top:282.50px;font-size:12px;line-height:16px;letter-spacing:0.095px;color:#000;">History</span>
<svg style="left:48px;top:302.5px;" width="19" height="19" viewBox="0 0 19 19"><g transform="translate(0,0.8)"><path d="M1.2,16.6 L1.2,2.6 Q1.2,1.4 2.4,1.4 L6.4,1.4 L7.8,3.2 L15.6,3.2 Q16.8,3.2 16.8,4.4 L16.8,16.6 Q16.8,17.2 16,17.2 L2,17.2 Q1.2,17.2 1.2,16.6 Z" fill="#dedede" stroke="#444" stroke-width="1"/><path d="M1.6,16.8 L1.6,5.8 Q1.6,5 2.6,5 L15.6,5 Q16.6,5 16.6,5.8 L16.6,16.8 Z" fill="#f6f6f6" stroke="#444" stroke-width="0.9"/><circle cx="9.4" cy="11.2" r="4.2" fill="#fff" stroke="#222" stroke-width="1.1"/><path d="M9.4,11.2 L12.2,8" stroke="#222" stroke-width="1"/><path d="M9.4,11.2 L13.4,12.2 A4.2,4.2 0 0 1 11,15.2 Z" fill="#e0261c"/></g></svg>
<span class="t" style="left:71.00px;top:304.50px;font-size:12px;line-height:16px;letter-spacing:-0.574px;color:#000;">Sensors</span>
<svg style="left:30px;top:328.1px;" width="6" height="10" viewBox="0 0 6 10"><path d="M1,1.2 L5,5 L1,8.8 Z" fill="#6e6e6e"/></svg>
<svg style="left:48px;top:324.5px;" width="19" height="19" viewBox="0 0 19 19"><g transform="translate(0,0.8)"><path d="M1.2,16.6 L1.2,2.6 Q1.2,1.4 2.4,1.4 L6.4,1.4 L7.8,3.2 L15.6,3.2 Q16.8,3.2 16.8,4.4 L16.8,16.6 Q16.8,17.2 16,17.2 L2,17.2 Q1.2,17.2 1.2,16.6 Z" fill="#dedede" stroke="#444" stroke-width="1"/><path d="M1.6,16.8 L1.6,5.8 Q1.6,5 2.6,5 L15.6,5 Q16.6,5 16.6,5.8 L16.6,16.8 Z" fill="#f6f6f6" stroke="#444" stroke-width="0.9"/><text x="9.2" y="15.6" text-anchor="middle" font-family="Liberation Serif,serif" font-weight="bold" font-size="12" fill="#2a78b0">A</text></g></svg>
<span class="t" style="left:71.00px;top:326.50px;font-size:12px;line-height:16px;letter-spacing:0.148px;color:#000;">Annotations</span>
<svg style="left:30px;top:350.1px;" width="6" height="10" viewBox="0 0 6 10"><path d="M1,1.2 L5,5 L1,8.8 Z" fill="#6e6e6e"/></svg>
<svg style="left:48px;top:346.5px;" width="19" height="19" viewBox="0 0 19 19"><g transform="translate(0,0.8)"><path d="M1.2,16.6 L1.2,2.6 Q1.2,1.4 2.4,1.4 L6.4,1.4 L7.8,3.2 L15.6,3.2 Q16.8,3.2 16.8,4.4 L16.8,16.6 Q16.8,17.2 16,17.2 L2,17.2 Q1.2,17.2 1.2,16.6 Z" fill="#dedede" stroke="#444" stroke-width="1"/><path d="M1.6,16.8 L1.6,5.8 Q1.6,5 2.6,5 L15.6,5 Q16.6,5 16.6,5.8 L16.6,16.8 Z" fill="#f6f6f6" stroke="#444" stroke-width="0.9"/><path d="M5.6,9 L9.4,7.6 L13,9 L13,13.6 L9.4,15.4 L5.6,13.6 Z" fill="#2a8ad0" stroke="#174f7c" stroke-width="0.9"/><path d="M5.6,9 L9.4,10.6 L13,9 M9.4,10.6 V15.4" stroke="#174f7c" stroke-width="0.8" fill="none"/></g></svg>
<span class="t" style="left:71.00px;top:348.50px;font-size:12px;line-height:16px;letter-spacing:-0.258px;color:#000;">Solid Bodies(1)</span>
<svg style="left:48px;top:368.5px;" width="19" height="19" viewBox="0 0 19 19"><circle cx="2.6" cy="3.2" r="1.7" fill="#f4f4f4" stroke="#777" stroke-width="0.8"/><circle cx="2.6" cy="9.4" r="1.7" fill="#5ab4f0" stroke="#1f6aa5" stroke-width="0.8"/><circle cx="2.6" cy="15.4" r="1.7" fill="#f2c200" stroke="#8a6a00" stroke-width="0.8"/><path d="M6.4,3.2 H17.6 M6.4,9.4 H17.6 M6.4,15.4 H11" stroke="#222" stroke-width="1.5"/><circle cx="14.6" cy="15.6" r="2.6" fill="#222"/><path d="M14.6,11.8 V19.4 M10.8,15.6 H18.4 M12,13 L17.2,18.2 M17.2,13 L12,18.2" stroke="#222" stroke-width="1.3"/><circle cx="14.6" cy="15.6" r="1" fill="#f7f7f7"/></svg>
<span class="t" style="left:71.00px;top:370.50px;font-size:12px;line-height:16px;letter-spacing:0.025px;color:#000;">Material &lt;not specified&gt;</span>
<svg style="left:48px;top:390.5px;" width="19" height="19" viewBox="0 0 19 19"><path d="M3,4.6 L13.6,2.2 L13.6,14 L3,16.6 Z" fill="#fbfbfb" stroke="#444" stroke-width="1"/><path d="M8.4,0.6 L8.4,18.6" stroke="#444" stroke-width="1" stroke-dasharray="2.6 1.6"/></svg>
<span class="t" style="left:71.00px;top:392.50px;font-size:12px;line-height:16px;letter-spacing:-0.184px;color:#000;">Front Plane</span>
<svg style="left:48px;top:412.5px;" width="19" height="19" viewBox="0 0 19 19"><path d="M3,4.6 L13.6,2.2 L13.6,14 L3,16.6 Z" fill="#fbfbfb" stroke="#444" stroke-width="1"/><path d="M8.4,0.6 L8.4,18.6" stroke="#444" stroke-width="1" stroke-dasharray="2.6 1.6"/></svg>
<span class="t" style="left:71.00px;top:414.50px;font-size:12px;line-height:16px;letter-spacing:-0.152px;color:#000;">Top Plane</span>
<svg style="left:48px;top:434.5px;" width="19" height="19" viewBox="0 0 19 19"><path d="M3,4.6 L13.6,2.2 L13.6,14 L3,16.6 Z" fill="#fbfbfb" stroke="#444" stroke-width="1"/><path d="M8.4,0.6 L8.4,18.6" stroke="#444" stroke-width="1" stroke-dasharray="2.6 1.6"/></svg>
<span class="t" style="left:71.00px;top:436.50px;font-size:12px;line-height:16px;letter-spacing:-0.185px;color:#000;">Right Plane</span>
<svg style="left:48px;top:456.5px;" width="19" height="19" viewBox="0 0 19 19"><path d="M3.4,16 L3.4,2.6 M3.4,16 L17,16" stroke="#222" stroke-width="1.3" fill="none"/><path d="M3.4,0.4 L5.4,4.4 L1.4,4.4 Z M18.4,16 L14.4,18 L14.4,14 Z" fill="#222"/><rect x="1.6" y="14.2" width="3.6" height="3.6" fill="#222"/></svg>
<span class="t" style="left:71.00px;top:458.50px;font-size:12px;line-height:16px;letter-spacing:0.082px;color:#000;">Origin</span>
<svg style="left:48px;top:478.5px;" width="19" height="19" viewBox="0 0 19 19"><path d="M17.6,1.6 L2,1.6 L2,11.6 Q2,16 7.6,17.6 L18,17.6" fill="none" stroke="#444" stroke-width="1.1"/></svg>
<span class="t" style="left:71.00px;top:480.50px;font-size:12px;line-height:16px;letter-spacing:-0.408px;color:#000;">Sketch1</span>
<svg style="left:30px;top:504.1px;" width="6" height="10" viewBox="0 0 6 10"><path d="M1,1.2 L5,5 L1,8.8 Z" fill="#6e6e6e"/></svg>
<svg style="left:48px;top:500.5px;" width="19" height="19" viewBox="0 0 19 19"><path d="M9.6,1 Q17.6,1 17.6,8.6 Q17.6,17.6 8,18.4 Q1.4,18 1.6,13.6 Q2.4,10 6.6,11.6 Q9.6,12.6 10.4,9.6 Q10.6,6.6 6.6,6.4 Q4.6,2 9.6,1 Z" fill="#3a96d6" stroke="#174f7c" stroke-width="1"/><path d="M6,8.4 L14,13.4" stroke="#222" stroke-width="1.2"/><path d="M4.6,10.6 L12.6,15" stroke="#fff" stroke-width="0.9"/></svg>
<span class="t" style="left:71.00px;top:502.50px;font-size:12px;line-height:16px;letter-spacing:-0.441px;color:#000;">Revolve1</span>
<svg style="left:5px;top:528.6px;" width="10" height="6" viewBox="0 0 10 6"><path d="M0.8,0.8 L9.2,0.8 L5,5.2 Z" fill="#6e6e6e"/></svg>
<svg style="left:25px;top:522.5px;" width="19" height="19" viewBox="0 0 19 19"><g fill="none" stroke="#2a7fb8" stroke-width="1.1"><path d="M2,13 L2,4.6 Q2,1.6 4.6,1.6 Q7.2,1.6 7.2,4.6 L7.2,13.4 Q7.2,15 5.9,15 Q4.6,15 4.6,13.4 L4.6,5"/><path d="M10.4,15.4 L10.4,6.6 Q10.4,3.6 13,3.6 Q15.8,3.6 15.8,6.6 L15.8,15.8 Q15.8,17.6 14.4,17.6 Q13,17.6 13,15.8 L13,7"/></g></svg>
<span class="t" style="left:48.00px;top:524.50px;font-size:12px;line-height:16px;letter-spacing:-0.135px;color:#000;">Mates</span>
<svg style="left:30px;top:548.1px;" width="6" height="10" viewBox="0 0 6 10"><path d="M1,1.2 L5,5 L1,8.8 Z" fill="#6e6e6e"/></svg>
<svg style="left:48px;top:544.5px;" width="19" height="19" viewBox="0 0 19 19"><g transform="translate(0,0.8)"><path d="M1.2,16.4 L1.2,2.6 Q1.2,1.4 2.4,1.4 L6.4,1.4 L7.8,3.2 L15.6,3.2 Q16.8,3.2 16.8,4.4 L16.8,16.4 Q16.8,17.2 16,17.2 L2,17.2 Q1.2,17.2 1.2,16.4 Z" fill="#2a7fb8" stroke="#174f7c" stroke-width="1"/><path d="M1.6,16.8 L1.6,5.8 Q1.6,5 2.6,5 L15.6,5 Q16.6,5 16.6,5.8 L16.6,16.8 Z" fill="url(#bfg)" stroke="#174f7c" stroke-width="0.8"/></g></svg>
<span class="t" style="left:71.00px;top:546.50px;font-size:12px;line-height:16px;letter-spacing:0.026px;color:#000;">Wicket Point</span>
<svg style="left:30px;top:570.1px;" width="6" height="10" viewBox="0 0 6 10"><path d="M1,1.2 L5,5 L1,8.8 Z" fill="#6e6e6e"/></svg>
<svg style="left:48px;top:566.5px;" width="19" height="19" viewBox="0 0 19 19"><g transform="translate(0,0.8)"><path d="M1.2,16.4 L1.2,2.6 Q1.2,1.4 2.4,1.4 L6.4,1.4 L7.8,3.2 L15.6,3.2 Q16.8,3.2 16.8,4.4 L16.8,16.4 Q16.8,17.2 16,17.2 L2,17.2 Q1.2,17.2 1.2,16.4 Z" fill="#e8e8e8" stroke="#c0c0c0" stroke-width="1"/><path d="M1.6,16.8 L1.6,5.8 Q1.6,5 2.6,5 L15.6,5 Q16.6,5 16.6,5.8 L16.6,16.8 Z" fill="#d6d6d6" stroke="#c0c0c0" stroke-width="0.8"/></g></svg>
<span class="t" style="left:71.00px;top:568.50px;font-size:12px;line-height:16px;letter-spacing:-1.003px;color:#8c8c8c;">SUPPRESS TO PLAY</span>
<svg style="left:30px;top:592.1px;" width="6" height="10" viewBox="0 0 6 10"><path d="M1,1.2 L5,5 L1,8.8 Z" fill="#6e6e6e"/></svg>
<svg style="left:48px;top:588.5px;" width="19" height="19" viewBox="0 0 19 19"><g transform="translate(0,0.8)"><path d="M1.2,16.4 L1.2,2.6 Q1.2,1.4 2.4,1.4 L6.4,1.4 L7.8,3.2 L15.6,3.2 Q16.8,3.2 16.8,4.4 L16.8,16.4 Q16.8,17.2 16,17.2 L2,17.2 Q1.2,17.2 1.2,16.4 Z" fill="#2a7fb8" stroke="#174f7c" stroke-width="1"/><path d="M1.6,16.8 L1.6,5.8 Q1.6,5 2.6,5 L15.6,5 Q16.6,5 16.6,5.8 L16.6,16.8 Z" fill="url(#bfg)" stroke="#174f7c" stroke-width="0.8"/></g></svg>
<span class="t" style="left:71.00px;top:590.50px;font-size:12px;line-height:16px;letter-spacing:-0.391px;color:#000;">Crease Mates</span>
<svg style="left:48px;top:610.5px;" width="19" height="19" viewBox="0 0 19 19"><path d="M1.4,15.6 L11.6,3.6 M8.6,6.4 L16.4,17.4" stroke="#1f5f8a" stroke-width="1.6" fill="none"/><path d="M9.6,5.6 L12.6,1.4 L15,3" stroke="#333" stroke-width="1" fill="none"/><rect x="8.4" y="4.6" width="3" height="3" fill="#fff" stroke="#333" stroke-width="0.8"/></svg>
<span class="t" style="left:71.00px;top:612.50px;font-size:12px;line-height:16px;letter-spacing:-0.065px;color:#000;">Coincident12 (Crease&lt;1&gt;,Stadium&lt;1&gt;)</span>
<div style="left:352px;top:213px;width:15px;height:417px;background:#f1f1f1;"></div>
<div style="left:354px;top:456px;width:11px;height:124px;background:#c8c8c8;"></div>
<svg style="left:354px;top:217px;" width="11" height="8" viewBox="0 0 11 8"><path d="M1.6,6.4 L5.5,2 L9.4,6.4" fill="none" stroke="#555" stroke-width="1.6"/></svg>
<svg style="left:354px;top:620px;" width="11" height="8" viewBox="0 0 11 8"><path d="M1.6,1.6 L5.5,6 L9.4,1.6" fill="none" stroke="#555" stroke-width="1.6"/></svg>
<div style="left:0px;top:632px;width:352px;height:17px;background:#f1f1f1;"></div>
<div style="left:16px;top:634px;width:254px;height:13px;background:#c8c8c8;"></div>
<svg style="left:3px;top:635px;" width="8" height="11" viewBox="0 0 8 11"><path d="M6.4,1.6 L2,5.5 L6.4,9.4" fill="none" stroke="#555" stroke-width="1.6"/></svg>
<svg style="left:339px;top:635px;" width="8" height="11" viewBox="0 0 8 11"><path d="M1.6,1.6 L6,5.5 L1.6,9.4" fill="none" stroke="#555" stroke-width="1.6"/></svg>
<div style="left:368px;top:365px;width:7px;height:38px;background:#f7f7f7;border:1px solid #d8d8d8;border-left:none;box-sizing:border-box;"></div>
<svg style="left:368px;top:380px;" width="6" height="6" viewBox="0 0 6 6"><circle cx="2.6" cy="3" r="1.8" fill="#ddd" stroke="#999" stroke-width="0.8"/></svg>
<div style="left:0px;top:651px;width:2px;height:353px;background:#9db3b8;"></div>
<div style="left:4px;top:654px;width:116px;height:22px;background:#ececec;border:1px solid #c4c4c4;box-sizing:border-box;"></div>
<span class="t" style="left:8.50px;top:656.80px;font-size:12px;line-height:16px;letter-spacing:-0.158px;color:#000;">Motion Analysis</span>
<svg style="left:105px;top:661px;" width="12" height="8" viewBox="0 0 12 8"><path d="M1.4,1.6 L6,6 L10.6,1.6" fill="none" stroke="#444" stroke-width="1.3"/></svg>
<div style="left:123px;top:653px;width:1px;height:23px;background:#b8b8b8;"></div>
<svg style="left:131px;top:654px;" width="20" height="20" viewBox="0 0 20 20"><rect x="1.6" y="1.6" width="12.6" height="14.6" fill="#fff" stroke="#333" stroke-width="1.1"/><rect x="1.6" y="1.6" width="12.6" height="3" fill="#2a8ad0" stroke="#333" stroke-width="1"/>
<path d="M1.6,8 H14.2 M1.6,11 H14.2 M1.6,14 H14.2 M5.8,4.6 V16.2 M10,4.6 V16.2" stroke="#333" stroke-width="0.9"/><path d="M19.35,14.71 L19.35,16.09 L17.91,16.15 L17.58,16.93 L18.56,17.99 L17.59,18.96 L16.53,17.98 L15.75,18.31 L15.69,19.75 L14.31,19.75 L14.25,18.31 L13.47,17.98 L12.41,18.96 L11.44,17.99 L12.42,16.93 L12.09,16.15 L10.65,16.09 L10.65,14.71 L12.09,14.65 L12.42,13.87 L11.44,12.81 L12.41,11.84 L13.47,12.82 L14.25,12.49 L14.31,11.05 L15.69,11.05 L15.75,12.49 L16.53,12.82 L17.59,11.84 L18.56,12.81 L17.58,13.87 L17.91,14.65 Z" fill="#111"/><circle cx="15" cy="15.4" r="1.2" fill="#fff"/></svg>
<svg style="left:159px;top:656px;" width="18" height="16" viewBox="0 0 18 16"><rect x="1.6" y="1.4" width="2.2" height="13" fill="#222"/><path d="M6.4,1.4 L16.4,8 L6.4,14.6 Z" fill="#222"/></svg>
<svg style="left:189px;top:656px;" width="12" height="16" viewBox="0 0 12 16"><path d="M1.4,1.4 L10.6,8 L1.4,14.6 Z" fill="#222"/></svg>
<div style="left:217px;top:659px;width:10.5px;height:10.5px;background:#c9c9c9;"></div>
<div style="left:244px;top:659.5px;width:184px;height:3px;background:#e3e3e3;border-top:1px solid #d0d0d0;box-sizing:border-box;"></div>
<svg style="left:359px;top:653px;" width="11" height="20" viewBox="0 0 11 20"><path d="M0.5,0.5 L10.5,0.5 L10.5,14 L5.5,19 L0.5,14 Z" fill="#0a78d7"/></svg>
<div style="left:436px;top:651px;width:80px;height:22px;background:#fff;border:1px solid #7a7a7a;box-sizing:border-box;"></div>
<div style="left:441.5px;top:654.5px;width:22px;height:14px;background:#0a78d7;"></div>
<span class="t" style="left:442.50px;top:653.60px;font-size:12px;line-height:16px;letter-spacing:-0.670px;color:#fff;">0.1x</span>
<svg style="left:501px;top:658px;" width="12" height="8" viewBox="0 0 12 8"><path d="M1.4,1.6 L6,6 L10.6,1.6" fill="none" stroke="#444" stroke-width="1.3"/></svg>
<div style="left:438px;top:673px;width:1px;height:3px;background:#666;"></div>
<svg style="left:522px;top:656px;" width="18" height="14" viewBox="0 0 18 14"><path d="M1,5.8 H10.4 V2 L17,7 L10.4,12 V8.2 H1 Z" fill="#111"/></svg>
<svg style="left:546px;top:661px;" width="8" height="5" viewBox="0 0 8 5"><path d="M0.6,0.5 L7.4,0.5 L4,4.2 Z" fill="#333"/></svg>
<svg style="left:561px;top:654px;" width="22" height="22" viewBox="0 0 22 22"><rect x="1.2" y="1.2" width="11.8" height="17.6" fill="#1c1c1c"/>
<g fill="#fff"><rect x="2" y="2.6" width="1.5" height="2.2" rx="0.6"/><rect x="2" y="6.8" width="1.5" height="2.2" rx="0.6"/><rect x="2" y="11" width="1.5" height="2.2" rx="0.6"/><rect x="2" y="15.2" width="1.5" height="2.2" rx="0.6"/>
<rect x="10.6" y="2.6" width="1.5" height="2.2" rx="0.6"/><rect x="4.8" y="2.4" width="4.6" height="2.6"/><rect x="4.8" y="7" width="3" height="6.6"/><rect x="4.8" y="15.2" width="3" height="2.6"/></g>
<path d="M7.4,7.4 L19.8,7.4 L19.8,19.6 L9,19.6 L7.4,18 Z" fill="#2a7fb8" stroke="#174f7c" stroke-width="1"/><rect x="10" y="8.4" width="7.2" height="4.8" fill="#f4f6f8" stroke="#123a5a" stroke-width="0.6"/><path d="M11,10 H16.2 M11,11.6 H16.2" stroke="#555" stroke-width="0.8"/><rect x="11" y="15.6" width="5.4" height="3.8" fill="#d8d8d8" stroke="#333" stroke-width="0.5"/><rect x="12.6" y="16.6" width="1.2" height="1.6" fill="#a01818"/></svg>
<div style="left:587px;top:653px;width:1px;height:23px;background:#b8b8b8;"></div>
<svg style="left:596px;top:654px;" width="22" height="22" viewBox="0 0 22 22"><rect x="1.2" y="5" width="3" height="6" fill="#2a3a44"/><path d="M2.6,8.2 L15.2,8.2 L15.2,19 L3.6,19 Q2.6,19 2.6,18 Z" fill="#2f93c8" stroke="#145a80" stroke-width="1"/><path d="M3,8 L14.8,8" stroke="#e8f4fa" stroke-width="1.4"/>
<circle cx="10.6" cy="13.2" r="2.3" fill="#fff" stroke="#1a1a1a" stroke-width="1.2"/><ellipse cx="17.2" cy="15" rx="1.6" ry="3.2" fill="#f0f0f0" stroke="#222" stroke-width="0.9"/>
<path d="M11.2,3.4 L18.4,10.4" stroke="#111" stroke-width="2.4" stroke-linecap="round"/>
<g fill="#f5b400" stroke="#c86a00" stroke-width="0.5"><path d="M5.4,2.2 l1.2,1.2 l-1.2,1.2 l-1.2,-1.2 Z"/><path d="M10.4,0.9 l1.5,1.5 l-1.5,1.5 l-1.5,-1.5 Z"/><path d="M15.4,1.2 l1.2,1.2 l-1.2,1.2 l-1.2,-1.2 Z"/></g><circle cx="18.4" cy="4.2" r="0.5" fill="#333"/></svg>
<div style="left:622px;top:653px;width:1px;height:23px;background:#b8b8b8;"></div>
<div style="left:628px;top:651px;width:27px;height:26px;background:#b4b4b4;border:1px solid #8e8e8e;box-sizing:border-box;"></div>
<svg style="left:631px;top:653px;" width="22" height="22" viewBox="0 0 22 22"><path d="M7,2.4 L12,11.6 L7,20.6 L2,11.6 Z" fill="#5aaee0" stroke="#174f7c" stroke-width="1"/><path d="M18.6,2 L8.4,10.6 L12.4,11 L7,17.6 L19,9.6 L14.4,9 Z" fill="#f5a800" stroke="#d03a00" stroke-width="0.9"/></svg>
<svg style="left:658px;top:653px;" width="22" height="22" viewBox="0 0 22 22"><path d="M7,2.4 L12,11.6 L7,20.6 L2,11.6 Z" fill="#5aaee0" stroke="#174f7c" stroke-width="1"/><path d="M11,14.6 H19 M15,10.6 V18.6" stroke="#1f9a1f" stroke-width="2.6"/></svg>
<div style="left:684px;top:653px;width:1px;height:23px;background:#b8b8b8;"></div>
<svg style="left:692px;top:654px;" width="22" height="22" viewBox="0 0 22 22"><ellipse cx="10.6" cy="15.4" rx="8.6" ry="4" fill="#5aaee0" stroke="#174f7c" stroke-width="1.2"/><path d="M3.6,9.6 Q10,1.6 15.4,9.4 L15.4,13" fill="none" stroke="#111" stroke-width="1.8"/><path d="M11.8,11.4 L15.4,16.4 L18.6,11.4 Z" fill="#111"/></svg>
<svg style="left:719px;top:654px;" width="22" height="22" viewBox="0 0 22 22"><g fill="none" stroke="#222" stroke-width="1.2"><ellipse cx="11" cy="4.6" rx="6.4" ry="2"/><ellipse cx="11" cy="8.8" rx="6.4" ry="2"/><ellipse cx="11" cy="13" rx="6.4" ry="2"/><ellipse cx="11" cy="17.2" rx="6.4" ry="2"/></g></svg>
<svg style="left:746px;top:654px;" width="22" height="22" viewBox="0 0 22 22"><path d="M4,3.6 L18,18.4" stroke="#222" stroke-width="4.4" stroke-linecap="round"/><path d="M4,3.6 L18,18.4" stroke="#e8e8e8" stroke-width="2.4" stroke-linecap="round"/><circle cx="3.6" cy="3.2" r="1.8" fill="#fff" stroke="#222" stroke-width="0.9"/><circle cx="18.4" cy="18.8" r="1.8" fill="#fff" stroke="#222" stroke-width="0.9"/></svg>
<svg style="left:773px;top:654px;" width="22" height="22" viewBox="0 0 22 22"><path d="M18,19 L8,9" stroke="#111" stroke-width="2.4"/><path d="M3.4,4 L13,6 L5.6,13.6 Z" fill="#111"/></svg>
<svg style="left:800px;top:653px;" width="22" height="24" viewBox="0 0 22 24"><rect x="8" y="1.6" width="5" height="7" rx="1" fill="#e4e4e4" stroke="#333" stroke-width="1"/><path d="M10.5,8.6 V12" stroke="#333" stroke-width="1.2"/><path d="M3.6,17.4 Q3.6,11.6 10.5,11.6 Q15.4,11.6 18.4,17 Q14.6,22.6 10.5,22.6 Q3.6,22.6 3.6,17.4 Z" fill="#d8d8d8" stroke="#333" stroke-width="1.1"/><circle cx="10" cy="17.2" r="2.4" fill="#fff" stroke="#333" stroke-width="1.6"/></svg>
<svg style="left:828px;top:654px;" width="22" height="22" viewBox="0 0 22 22"><path d="M6,6 Q11,3.6 16,6" fill="none" stroke="#ccc" stroke-width="1.6"/><path d="M6,9 Q11,6.6 16,9" fill="none" stroke="#bbb" stroke-width="1.4"/><path d="M5.6,13.4 Q11,9.6 16.4,13.4 Q16.6,20.6 11,20.8 Q5.4,20.6 5.6,13.4 Z" fill="#f0f0f0" stroke="#333" stroke-width="1.1"/></svg>
<div style="left:854px;top:653px;width:1px;height:23px;background:#b8b8b8;"></div>
<svg style="left:862px;top:653px;" width="24" height="24" viewBox="0 0 24 24"><rect x="6.6" y="2.6" width="13" height="12.6" fill="#fff" stroke="#222" stroke-width="1.4"/><path d="M8.4,11 Q10.6,6.6 13,10 Q15.4,13 18,6" fill="none" stroke="#2a8ad0" stroke-width="1.4"/><rect x="7.4" y="11.6" width="11.4" height="3" fill="#9cd0f0"/>
<text x="0.6" y="7.4" font-family="Liberation Sans,sans-serif" font-size="7.5" fill="#111">y</text><text x="15.6" y="23" font-family="Liberation Sans,sans-serif" font-size="7.5" fill="#111">x</text></svg>
<div style="left:889px;top:653px;width:1px;height:23px;background:#b8b8b8;"></div>
<svg style="left:899px;top:655px;" width="18" height="18" viewBox="0 0 18 18"><path d="M17.15,7.43 L17.15,10.57 L14.83,11.40 L14.81,11.43 L15.87,13.65 L13.65,15.87 L11.43,14.81 L11.40,14.83 L10.57,17.15 L7.43,17.15 L6.60,14.83 L6.57,14.81 L4.35,15.87 L2.13,13.65 L3.19,11.43 L3.17,11.40 L0.85,10.57 L0.85,7.43 L3.17,6.60 L3.19,6.57 L2.13,4.35 L4.35,2.13 L6.57,3.19 L6.60,3.17 L7.43,0.85 L10.57,0.85 L11.40,3.17 L11.43,3.19 L13.65,2.13 L15.87,4.35 L14.81,6.57 L14.83,6.60 Z" fill="none" stroke="#333" stroke-width="1.25" stroke-linejoin="round"/><circle cx="9" cy="9" r="3" fill="none" stroke="#333" stroke-width="1.25"/></svg>
<div style="left:924px;top:653px;width:1px;height:23px;background:#b8b8b8;"></div>
<svg style="left:932px;top:653px;" width="22" height="22" viewBox="0 0 22 22"><path d="M3,7.6 L7.6,4.6 L10.6,5.4 L10.6,10.6 L15.6,11.4 L19,13.4 L19,17.4 L14.6,20 L3,16 Z" fill="#e2e2e2" stroke="#cdcdcd" stroke-width="1.1"/></svg>
<svg style="left:959px;top:653px;" width="22" height="22" viewBox="0 0 22 22"><path d="M3,7.6 L7.6,4.6 L10.6,5.4 L10.6,10.6 L15.6,11.4 L19,13.4 L19,17.4 L14.6,20 L3,16 Z" fill="#e2e2e2" stroke="#cdcdcd" stroke-width="1.1"/><path d="M10,2 h9 v9 h-9 Z M13,2 v9 M16,2 v9 M10,5 h9 M10,8 h9" fill="none" stroke="#cfcfcf" stroke-width="0.7"/></svg>
<svg style="left:985px;top:653px;" width="22" height="22" viewBox="0 0 22 22"><path d="M3,7.6 L7.6,4.6 L10.6,5.4 L10.6,10.6 L15.6,11.4 L19,13.4 L19,17.4 L14.6,20 L3,16 Z" fill="#e2e2e2" stroke="#cdcdcd" stroke-width="1.1"/></svg>
<svg style="left:1014px;top:661px;" width="8" height="5" viewBox="0 0 8 5"><path d="M0.6,0.5 L7.4,0.5 L4,4.2 Z" fill="#aaa"/></svg>
<div style="left:1028px;top:653px;width:1px;height:23px;background:#b8b8b8;"></div>
<svg style="left:1866px;top:653px;" width="22" height="22" viewBox="0 0 22 22"><rect x="1.6" y="2" width="18.6" height="17.6" fill="#fff" stroke="#333" stroke-width="1.1"/><rect x="1.6" y="2" width="18.6" height="3.4" fill="#174f7c"/>
<path d="M1.6,8.6 H12 M1.6,11.6 H12 M1.6,14.6 H12 M1.6,17 H12 M5,5.4 V19.6 M8.4,5.4 V19.6 M12,5.4 V19.6" stroke="#333" stroke-width="0.8"/><path d="M13.6,9 H18 M13.6,12 H17 M13.6,15 H18.4" stroke="#2a8ad0" stroke-width="1.2"/></svg>
<svg style="left:1898px;top:659px;" width="13" height="9" viewBox="0 0 13 9"><path d="M1.6,1.6 L6.5,6.6 L11.4,1.6" fill="none" stroke="#444" stroke-width="1.8"/></svg>
<div style="left:3px;top:678px;width:1914px;height:30px;background:#cccccc;"></div>
<div style="left:98px;top:678px;width:27px;height:26px;background:#bababa;border:1px solid #858585;box-sizing:border-box;"></div>
<svg style="left:102px;top:681px;" width="19" height="19" viewBox="0 0 19 19"><path d="M2.6,3 L16.4,3 L11.2,9.6 L11.2,15.6 L7.8,15.6 L7.8,9.6 Z" fill="#fff" stroke="#333" stroke-width="1.1" stroke-linejoin="round"/></svg>
<svg style="left:128px;top:680px;" width="22" height="22" viewBox="0 0 22 22"><path d="M1.6,3 L5,3 L6,4.6 L12.6,4.6 L12.6,8 L16.6,6 L16.6,14 L12.6,12 L12.6,15.6 L1.6,15.6 Z" fill="#2a8ad0" stroke="#174f7c" stroke-width="1"/><circle cx="7.6" cy="10" r="2.2" fill="#e6f2fb" stroke="#222" stroke-width="0.8"/><path d="M12.4,12.6 h6 l-2.2,2.6 v3.2 h-1.6 v-3.2 Z" fill="#b44fd0"/></svg>
<svg style="left:154px;top:680px;" width="22" height="22" viewBox="0 0 22 22"><path d="M16.73,8.40 L16.73,10.40 L14.67,10.55 L14.22,11.78 L15.71,13.22 L14.42,14.75 L12.74,13.54 L11.62,14.19 L11.82,16.25 L9.85,16.60 L9.35,14.59 L8.06,14.37 L6.90,16.08 L5.17,15.07 L6.07,13.22 L5.23,12.22 L3.24,12.78 L2.56,10.90 L4.44,10.05 L4.44,8.75 L2.56,7.90 L3.24,6.02 L5.23,6.58 L6.07,5.58 L5.17,3.73 L6.90,2.72 L8.06,4.43 L9.35,4.21 L9.85,2.20 L11.82,2.55 L11.62,4.61 L12.74,5.26 L14.42,4.05 L15.71,5.58 L14.22,7.02 L14.67,8.25 Z" fill="#d4d4d4" stroke="#666" stroke-width="1"/><circle cx="9.6" cy="9.4" r="2.4" fill="#ccc" stroke="#666" stroke-width="0.9"/><path d="M13,13.6 h6 l-2.2,2.6 v3.2 h-1.6 v-3.2 Z" fill="#b44fd0"/></svg>
<svg style="left:181px;top:680px;" width="24" height="22" viewBox="0 0 24 22"><path d="M1.6,5 L15.4,5 L10.4,11.4 L10.4,17.6 L6.8,17.6 L6.8,11.4 Z" fill="#c860e0" stroke="#7a2a96" stroke-width="1"/><path d="M13.4,3 L13.4,13 L15.6,11 L17,14.4 L18.4,13.8 L17,10.6 L20,10.4 Z" fill="#fff" stroke="#222" stroke-width="0.8"/></svg>
<svg style="left:208px;top:680px;" width="24" height="22" viewBox="0 0 24 22"><rect x="2" y="2" width="12.6" height="11.6" fill="#fff" stroke="#222" stroke-width="1.3"/><path d="M4,10 Q6,5 8.4,8.6 Q10.6,11 13,4.6" fill="none" stroke="#2a8ad0" stroke-width="1.2"/><path d="M15,13.6 h6 l-2.2,2.6 v3.2 h-1.6 v-3.2 Z" fill="#b44fd0"/></svg>
<div style="left:233px;top:678px;width:5px;height:328px;background:#f7f7f7;"></div>
<div style="left:234px;top:678px;width:1px;height:328px;background:#8c8ca4;"></div>
<div style="left:236px;top:678px;width:1.2px;height:328px;background:#70708c;"></div>
<svg style="left:287.8px;top:678px;" width="1629.2" height="30" viewBox="0 0 1629.2 30"><defs><pattern id="hatch" width="8" height="8" patternUnits="userSpaceOnUse" patternTransform="translate(3 0)"><rect width="8" height="8" fill="#f9fc74"/><path d="M-1,9 L9,-1 M-1,1 L1,-1 M7,9 L9,7" stroke="#a8a850" stroke-width="0.75"/></pattern></defs><rect x="0" y="0" width="1116.2" height="30" fill="url(#hatch)"/><rect x="-0.5" y="3" width="1.2" height="27" fill="#4c4660"/><rect x="19.1" y="21.5" width="1" height="7.5" fill="#4c4660"/><rect x="38.7" y="21.5" width="1" height="7.5" fill="#4c4660"/><rect x="58.3" y="21.5" width="1" height="7.5" fill="#4c4660"/><rect x="77.9" y="21.5" width="1" height="7.5" fill="#4c4660"/><rect x="97.5" y="17" width="1" height="12" fill="#4c4660"/><rect x="117.1" y="21.5" width="1" height="7.5" fill="#4c4660"/><rect x="136.7" y="21.5" width="1" height="7.5" fill="#4c4660"/><rect x="156.3" y="21.5" width="1" height="7.5" fill="#4c4660"/><rect x="175.9" y="21.5" width="1" height="7.5" fill="#4c4660"/><rect x="195.4" y="3" width="1.2" height="27" fill="#4c4660"/><rect x="215.0" y="21.5" width="1" height="7.5" fill="#4c4660"/><rect x="234.6" y="21.5" width="1" height="7.5" fill="#4c4660"/><rect x="254.2" y="21.5" width="1" height="7.5" fill="#4c4660"/><rect x="273.8" y="21.5" width="1" height="7.5" fill="#4c4660"/><rect x="293.4" y="17" width="1" height="12" fill="#4c4660"/><rect x="313.0" y="21.5" width="1" height="7.5" fill="#4c4660"/><rect x="332.6" y="21.5" width="1" height="7.5" fill="#4c4660"/><rect x="352.2" y="21.5" width="1" height="7.5" fill="#4c4660"/><rect x="371.8" y="21.5" width="1" height="7.5" fill="#4c4660"/><rect x="391.4" y="3" width="1.2" height="27" fill="#4c4660"/><rect x="411.0" y="21.5" width="1" height="7.5" fill="#4c4660"/><rect x="430.6" y="21.5" width="1" height="7.5" fill="#4c4660"/><rect x="450.2" y="21.5" width="1" height="7.5" fill="#4c4660"/><rect x="469.8" y="21.5" width="1" height="7.5" fill="#4c4660"/><rect x="489.4" y="17" width="1" height="12" fill="#4c4660"/><rect x="509.0" y="21.5" width="1" height="7.5" fill="#4c4660"/><rect x="528.6" y="21.5" width="1" height="7.5" fill="#4c4660"/><rect x="548.2" y="21.5" width="1" height="7.5" fill="#4c4660"/><rect x="567.8" y="21.5" width="1" height="7.5" fill="#4c4660"/><rect x="587.3" y="3" width="1.2" height="27" fill="#4c4660"/><rect x="606.9" y="21.5" width="1" height="7.5" fill="#4c4660"/><rect x="626.5" y="21.5" width="1" height="7.5" fill="#4c4660"/><rect x="646.1" y="21.5" width="1" height="7.5" fill="#4c4660"/><rect x="665.7" y="21.5" width="1" height="7.5" fill="#4c4660"/><rect x="685.3" y="17" width="1" height="12" fill="#4c4660"/><rect x="704.9" y="21.5" width="1" height="7.5" fill="#4c4660"/><rect x="724.5" y="21.5" width="1" height="7.5" fill="#4c4660"/><rect x="744.1" y="21.5" width="1" height="7.5" fill="#4c4660"/><rect x="763.7" y="21.5" width="1" height="7.5" fill="#4c4660"/><rect x="783.3" y="3" width="1.2" height="27" fill="#4c4660"/><rect x="802.9" y="21.5" width="1" height="7.5" fill="#4c4660"/><rect x="822.5" y="21.5" width="1" height="7.5" fill="#4c4660"/><rect x="842.1" y="21.5" width="1" height="7.5" fill="#4c4660"/><rect x="861.7" y="21.5" width="1" height="7.5" fill="#4c4660"/><rect x="881.3" y="17" width="1" height="12" fill="#4c4660"/><rect x="900.9" y="21.5" width="1" height="7.5" fill="#4c4660"/><rect x="920.5" y="21.5" width="1" height="7.5" fill="#4c4660"/><rect x="940.1" y="21.5" width="1" height="7.5" fill="#4c4660"/><rect x="959.7" y="21.5" width="1" height="7.5" fill="#4c4660"/><rect x="979.2" y="3" width="1.2" height="27" fill="#4c4660"/><rect x="998.8" y="21.5" width="1" height="7.5" fill="#4c4660"/><rect x="1018.4" y="21.5" width="1" height="7.5" fill="#4c4660"/><rect x="1038.0" y="21.5" width="1" height="7.5" fill="#4c4660"/><rect x="1057.6" y="21.5" width="1" height="7.5" fill="#4c4660"/><rect x="1077.2" y="17" width="1" height="12" fill="#4c4660"/><rect x="1096.8" y="21.5" width="1" height="7.5" fill="#4c4660"/><rect x="1116.4" y="21.5" width="1" height="7.5" fill="#4c4660"/><rect x="1136.0" y="21.5" width="1" height="7.5" fill="#4c4660"/><rect x="1155.6" y="21.5" width="1" height="7.5" fill="#4c4660"/><rect x="1175.2" y="3" width="1.2" height="27" fill="#4c4660"/><rect x="1194.8" y="21.5" width="1" height="7.5" fill="#4c4660"/><rect x="1214.4" y="21.5" width="1" height="7.5" fill="#4c4660"/><rect x="1234.0" y="21.5" width="1" height="7.5" fill="#4c4660"/><rect x="1253.6" y="21.5" width="1" height="7.5" fill="#4c4660"/><rect x="1273.2" y="17" width="1" height="12" fill="#4c4660"/><rect x="1292.8" y="21.5" width="1" height="7.5" fill="#4c4660"/><rect x="1312.4" y="21.5" width="1" height="7.5" fill="#4c4660"/><rect x="1332.0" y="21.5" width="1" height="7.5" fill="#4c4660"/><rect x="1351.6" y="21.5" width="1" height="7.5" fill="#4c4660"/><rect x="1371.1" y="3" width="1.2" height="27" fill="#4c4660"/><rect x="1390.7" y="21.5" width="1" height="7.5" fill="#4c4660"/><rect x="1410.3" y="21.5" width="1" height="7.5" fill="#4c4660"/><rect x="1429.9" y="21.5" width="1" height="7.5" fill="#4c4660"/><rect x="1449.5" y="21.5" width="1" height="7.5" fill="#4c4660"/><rect x="1469.1" y="17" width="1" height="12" fill="#4c4660"/><rect x="1488.7" y="21.5" width="1" height="7.5" fill="#4c4660"/><rect x="1508.3" y="21.5" width="1" height="7.5" fill="#4c4660"/><rect x="1527.9" y="21.5" width="1" height="7.5" fill="#4c4660"/><rect x="1547.5" y="21.5" width="1" height="7.5" fill="#4c4660"/><rect x="1567.1" y="3" width="1.2" height="27" fill="#4c4660"/><rect x="1586.7" y="21.5" width="1" height="7.5" fill="#4c4660"/><rect x="1606.3" y="21.5" width="1" height="7.5" fill="#4c4660"/><rect x="1625.9" y="21.5" width="1" height="7.5" fill="#4c4660"/></svg>
<span class="t" style="left:290.30px;top:680.00px;font-size:12px;line-height:16px;letter-spacing:-0.805px;color:#6e6e6e;font-weight:bold;">0 sec</span>
<span class="t" style="left:486.25px;top:680.00px;font-size:12px;line-height:16px;letter-spacing:-0.264px;color:#6e6e6e;font-weight:bold;">0.100 sec</span>
<span class="t" style="left:682.20px;top:680.00px;font-size:12px;line-height:16px;letter-spacing:-0.264px;color:#6e6e6e;font-weight:bold;">0.200 sec</span>
<span class="t" style="left:878.15px;top:680.00px;font-size:12px;line-height:16px;letter-spacing:-0.264px;color:#6e6e6e;font-weight:bold;">0.300 sec</span>
<span class="t" style="left:1074.10px;top:680.00px;font-size:12px;line-height:16px;letter-spacing:-0.264px;color:#6e6e6e;font-weight:bold;">0.400 sec</span>
<span class="t" style="left:1270.05px;top:680.00px;font-size:12px;line-height:16px;letter-spacing:-0.264px;color:#6e6e6e;font-weight:bold;">0.500 sec</span>
<span class="t" style="left:1466.00px;top:680.00px;font-size:12px;line-height:16px;letter-spacing:-0.264px;color:#6e6e6e;font-weight:bold;">0.600 sec</span>
<span class="t" style="left:1661.95px;top:680.00px;font-size:12px;line-height:16px;letter-spacing:-0.264px;color:#6e6e6e;font-weight:bold;">0.700 sec</span>
<span class="t" style="left:1857.90px;top:680.00px;font-size:12px;line-height:16px;letter-spacing:-0.264px;color:#6e6e6e;font-weight:bold;clip-path:inset(0 0 0 0);">0.800 sec</span>
<div style="left:238px;top:708px;width:1679px;height:280px;background:#f7f7f7;"></div>
<div style="left:1917px;top:678px;width:3px;height:326px;background:#f7f7f7;"></div>
<div style="left:1918px;top:651px;width:1px;height:371px;background:#a9b9be;"></div>
<div style="left:287.3px;top:708px;width:1px;height:280px;background:#b4b4b4;"></div>
<div style="left:483.25px;top:708px;width:1px;height:280px;background:#b4b4b4;"></div>
<div style="left:679.2px;top:708px;width:1px;height:280px;background:#b4b4b4;"></div>
<div style="left:875.1499999999999px;top:708px;width:1px;height:280px;background:#b4b4b4;"></div>
<div style="left:1071.1px;top:708px;width:1px;height:280px;background:#b4b4b4;"></div>
<div style="left:1267.05px;top:708px;width:1px;height:280px;background:#b4b4b4;"></div>
<div style="left:1462.9999999999998px;top:708px;width:1px;height:280px;background:#b4b4b4;"></div>
<div style="left:1658.9499999999998px;top:708px;width:1px;height:280px;background:#b4b4b4;"></div>
<div style="left:1854.8999999999999px;top:708px;width:1px;height:280px;background:#b4b4b4;"></div>
<div style="left:287.8px;top:800px;width:1371.2px;height:14.5px;background:#ccaa48;"></div>
<div style="left:287.8px;top:804.5px;width:842.2px;height:5px;background:#00ffff;"></div>
<div style="left:287.8px;top:888px;width:1371.2px;height:14.5px;background:#ccaa48;"></div>
<div style="left:287.8px;top:910px;width:1371.2px;height:14.5px;background:#ccaa48;"></div>
<div style="left:287.8px;top:932px;width:1371.2px;height:14.5px;background:#ccaa48;"></div>
<div style="left:287.8px;top:954px;width:1371.2px;height:14.5px;background:#ccaa48;"></div>
<div style="left:287.8px;top:976px;width:1371.2px;height:12px;background:#ccaa48;"></div>
<div style="left:287.8px;top:718.5px;width:1371.2px;height:1.3px;background:#111;"></div>
<div style="left:1198px;top:678px;width:2px;height:310px;background:#6a6a6a;"></div>
<svg style="left:281px;top:708px;" width="14" height="22" viewBox="0 0 14 22"><path d="M7,1.8000000000000007 L11.8,11 L7,20.2 L2.2,11 Z" fill="#000" stroke="#000" stroke-width="0.7"/></svg>
<svg style="left:281px;top:730px;" width="14" height="22" viewBox="0 0 14 22"><path d="M7,1.8000000000000007 L11.8,11 L7,20.2 L2.2,11 Z" fill="#000" stroke="#000" stroke-width="0.7"/></svg>
<svg style="left:281px;top:774px;" width="14" height="22" viewBox="0 0 14 22"><path d="M7,1.8000000000000007 L11.8,11 L7,20.2 L2.2,11 Z" fill="#0505e6" stroke="#00005a" stroke-width="0.7"/></svg>
<svg style="left:281px;top:796px;" width="14" height="22" viewBox="0 0 14 22"><path d="M7,1.8000000000000007 L11.8,11 L7,20.2 L2.2,11 Z" fill="#0505e6" stroke="#00005a" stroke-width="0.7"/></svg>
<svg style="left:281px;top:818px;" width="14" height="22" viewBox="0 0 14 22"><path d="M7,1.8000000000000007 L11.8,11 L7,20.2 L2.2,11 Z" fill="#0505e6" stroke="#00005a" stroke-width="0.7"/></svg>
<svg style="left:281px;top:840px;" width="14" height="22" viewBox="0 0 14 22"><path d="M7,1.8000000000000007 L11.8,11 L7,20.2 L2.2,11 Z" fill="#0505e6" stroke="#00005a" stroke-width="0.7"/></svg>
<svg style="left:281px;top:862px;" width="14" height="22" viewBox="0 0 14 22"><path d="M7,1.8000000000000007 L11.8,11 L7,20.2 L2.2,11 Z" fill="#0505e6" stroke="#00005a" stroke-width="0.7"/></svg>
<svg style="left:281px;top:884px;" width="14" height="22" viewBox="0 0 14 22"><path d="M7,1.8000000000000007 L11.8,11 L7,20.2 L2.2,11 Z" fill="#0505e6" stroke="#00005a" stroke-width="0.7"/></svg>
<svg style="left:281px;top:906px;" width="14" height="22" viewBox="0 0 14 22"><path d="M7,1.8000000000000007 L11.8,11 L7,20.2 L2.2,11 Z" fill="#0505e6" stroke="#00005a" stroke-width="0.7"/></svg>
<svg style="left:281px;top:928px;" width="14" height="22" viewBox="0 0 14 22"><path d="M7,1.8000000000000007 L11.8,11 L7,20.2 L2.2,11 Z" fill="#0505e6" stroke="#00005a" stroke-width="0.7"/></svg>
<svg style="left:281px;top:950px;" width="14" height="22" viewBox="0 0 14 22"><path d="M7,1.8000000000000007 L11.8,11 L7,20.2 L2.2,11 Z" fill="#0505e6" stroke="#00005a" stroke-width="0.7"/></svg>
<svg style="left:281px;top:972px;" width="14" height="16" viewBox="0 0 14 16"><path d="M7,1.5 L12.5,11 L10.2,16 L3.8,16 L1.5,11 Z" fill="#0505e6" stroke="#00007a" stroke-width="0.7"/></svg>
<svg style="left:907px;top:796px;" width="14" height="22" viewBox="0 0 14 22"><path d="M7,1.8000000000000007 L11.8,11 L7,20.2 L2.2,11 Z" fill="#0505e6" stroke="#00005a" stroke-width="0.7"/></svg>
<svg style="left:1123px;top:796px;" width="14" height="22" viewBox="0 0 14 22"><path d="M7,1.8000000000000007 L11.8,11 L7,20.2 L2.2,11 Z" fill="#0505e6" stroke="#00005a" stroke-width="0.7"/></svg>
<svg style="left:1652.5px;top:708px;" width="14" height="22" viewBox="0 0 14 22"><path d="M7,0.5 L13,11 L7,21.5 L1,11 Z" fill="#3f9ef2" stroke="#3f9ef2" stroke-width="0.7"/></svg>
<div style="left:1836px;top:962px;width:81px;height:26px;background:#c8c8c8;"></div>
<svg style="left:1836.7px;top:962px;" width="22" height="26" viewBox="0 0 22 26"><path d="M10.2,13.8 L4.8,20.2" stroke="#2a7fb8" stroke-width="3.6" stroke-linecap="round"/><path d="M10.2,13.8 L4.8,20.2" stroke="#9cd8f6" stroke-width="1.3" stroke-linecap="round"/><circle cx="14" cy="9.5" r="5.5" fill="#f4f4f4" stroke="#444" stroke-width="1.2"/><path d="M14,5.6 V13.4 M10.1,9.5 H17.9" stroke="#222" stroke-width="0.9"/><path d="M14,4.9 l-1.3,1.6 h2.6 Z M14,14.1 l-1.3,-1.6 h2.6 Z M9.4,9.5 l1.6,-1.3 v2.6 Z M18.6,9.5 l-1.6,-1.3 v2.6 Z" fill="#222"/></svg>
<svg style="left:1864.3px;top:962px;" width="22" height="26" viewBox="0 0 22 26"><path d="M10.2,13.8 L4.8,20.2" stroke="#2a7fb8" stroke-width="3.6" stroke-linecap="round"/><path d="M10.2,13.8 L4.8,20.2" stroke="#9cd8f6" stroke-width="1.3" stroke-linecap="round"/><circle cx="14" cy="9.5" r="5.5" fill="#f4f4f4" stroke="#444" stroke-width="1.2"/><path d="M14,6.4 V12.6 M10.9,9.5 H17.1" stroke="#111" stroke-width="2.2"/></svg>
<svg style="left:1891px;top:962px;" width="22" height="26" viewBox="0 0 22 26"><path d="M10.2,13.8 L4.8,20.2" stroke="#2a7fb8" stroke-width="3.6" stroke-linecap="round"/><path d="M10.2,13.8 L4.8,20.2" stroke="#9cd8f6" stroke-width="1.3" stroke-linecap="round"/><circle cx="14" cy="9.5" r="5.5" fill="#f4f4f4" stroke="#444" stroke-width="1.2"/><path d="M10.9,9.5 H17.1" stroke="#111" stroke-width="2.2"/></svg>
<div style="left:3px;top:708px;width:230px;height:280px;background:#f7f7f7;"></div>
<div style="left:4px;top:708px;width:15px;height:280px;background:#f1f1f1;"></div>
<div style="left:5px;top:725px;width:13px;height:94px;background:#c8c8c8;"></div>
<svg style="left:5px;top:712px;" width="13" height="9" viewBox="0 0 13 9"><path d="M2,7 L6.5,2.4 L11,7" fill="none" stroke="#555" stroke-width="1.6"/></svg>
<svg style="left:5px;top:975px;" width="13" height="9" viewBox="0 0 13 9"><path d="M2,2 L6.5,6.6 L11,2" fill="none" stroke="#555" stroke-width="1.6"/></svg>
<div style="left:3px;top:708px;width:230px;height:280px;overflow:hidden;">
<svg style="left:22px;top:8px;" width="10" height="6" viewBox="0 0 10 6"><path d="M0.8,0.8 L9.2,0.8 L5,5.2 Z" fill="#6e6e6e"/></svg>
<svg style="left:44px;top:1px;" width="20" height="20" viewBox="0 0 20 20"><path d="M1.4,8.4 L5.6,5 L8.4,5.6 L8.4,11 L13,11.6 L16.6,13.6 L16.6,16.6 L12.6,19 L1.4,15 Z" fill="#f2c200" stroke="#8a6a00" stroke-width="1.1"/>
<path d="M7.6,4 L11.4,1.4 L17.4,2.6 L17.4,10 L13.4,12.6 L7.6,11 Z" fill="#6cc0f4" stroke="#174f7c" stroke-width="1"/><path d="M7.6,4 L13.4,5.4 L17.4,2.6 M13.4,5.4 L13.4,12.6" fill="none" stroke="#174f7c" stroke-width="0.8"/></svg>
<span class="t" style="left:66.50px;top:4.00px;font-size:12px;line-height:16px;letter-spacing:-0.014px;color:#000;">Cricket Wicket (&quot;Cricket Wicket</span>
<svg style="left:66px;top:23px;" width="20" height="20" viewBox="0 0 20 20"><path d="M1.2,11.4 L8,5.6 L15.4,1.2 L18,3.8 L14.2,10.8 L9.6,17.8 Z" fill="#e9e9e9" stroke="#3a3a3a" stroke-width="1.1" stroke-linejoin="round"/><path d="M8,5.6 L14.2,10.8" stroke="#777" stroke-width="0.9"/><path d="M11,3.8 L16,7.6" stroke="#aaa" stroke-width="0.7"/><ellipse cx="5.4" cy="14.6" rx="5.3" ry="2.7" fill="#d6d6d6" stroke="#3a3a3a" stroke-width="1.1" transform="rotate(37 5.4 14.6)"/><ellipse cx="5.2" cy="14.9" rx="3.2" ry="1.3" fill="#f2f2f2" stroke="#8a8a8a" stroke-width="0.7" transform="rotate(37 5.2 14.9)"/></svg>
<span class="t" style="left:89.50px;top:26.00px;font-size:12px;line-height:16px;letter-spacing:-0.074px;color:#000;">Orientation and Camera Vi</span>
<svg style="left:45px;top:52px;" width="10" height="6" viewBox="0 0 10 6"><path d="M0.8,0.8 L9.2,0.8 L5,5.2 Z" fill="#6e6e6e"/></svg>
<svg style="left:66px;top:45px;" width="20" height="20" viewBox="0 0 20 20"><g transform="translate(0,0.8)"><path d="M1.2,16.6 L1.2,2.6 Q1.2,1.4 2.4,1.4 L6.4,1.4 L7.8,3.2 L15.6,3.2 Q16.8,3.2 16.8,4.4 L16.8,16.6 Q16.8,17.2 16,17.2 L2,17.2 Q1.2,17.2 1.2,16.6 Z" fill="#dedede" stroke="#444" stroke-width="1"/><path d="M1.6,16.8 L1.6,5.8 Q1.6,5 2.6,5 L15.6,5 Q16.6,5 16.6,5.8 L16.6,16.8 Z" fill="#f6f6f6" stroke="#444" stroke-width="0.9"/><rect x="3.6" y="7.6" width="11.4" height="8.4" fill="#cfe8f8"/><circle cx="9.4" cy="11.6" r="1.8" fill="#fff" stroke="#1a4a70" stroke-width="1"/><path d="M9.4,7.4 V9 M9.4,14.2 V15.8 M5.2,11.6 H6.8 M12,11.6 H13.6 M6.4,8.6 L7.6,9.8 M11.2,13.4 L12.4,14.6 M12.4,8.6 L11.2,9.8 M7.6,13.4 L6.4,14.6" stroke="#1a4a70" stroke-width="1"/></g></svg>
<span class="t" style="left:89.50px;top:48.00px;font-size:12px;line-height:16px;letter-spacing:-0.216px;color:#000;">Lights and Cameras</span>
<svg style="left:90px;top:67px;" width="20" height="20" viewBox="0 0 20 20"><path d="M7,1.6 Q11.6,1.6 11.6,6.4 Q11.6,8.6 9.6,11 L9.6,13 L4.4,13 L4.4,11 Q2.4,8.6 2.4,6.4 Q2.4,1.6 7,1.6 Z" fill="#fff" stroke="#333" stroke-width="1.1"/><rect x="4.6" y="13.4" width="4.8" height="3.4" rx="0.8" fill="#222"/></svg>
<span class="t" style="left:112.50px;top:70.00px;font-size:12px;line-height:16px;letter-spacing:0.212px;color:#000;">Ambient</span>
<div style="left:86px;top:88px;width:77px;height:22px;background:#a9cbea;border:1px solid #5a9fd4;box-sizing:border-box;"></div>
<svg style="left:89px;top:89px;" width="20" height="20" viewBox="0 0 20 20"><path d="M1.4,2.6 L5.6,2.6 L6.6,4.4 L12.6,4.4 L12.6,8 L17,6 L17,15 L12.6,13 L12.6,16.6 L1.4,16.6 Z" fill="#2a8ad0" stroke="#174f7c" stroke-width="1"/><path d="M1.2,2.6 V7" stroke="#222" stroke-width="1.4"/><circle cx="8" cy="10.6" r="2.4" fill="#e6f2fb" stroke="#222" stroke-width="0.9"/><path d="M13.2,7.6 L16.4,6.4 L16.4,14.6 L13.2,13.4 Z" fill="#eee" stroke="#222" stroke-width="0.8"/></svg>
<span class="t" style="left:112.50px;top:92.00px;font-size:12px;line-height:16px;letter-spacing:-0.550px;color:#000;">Camera1</span>
<svg style="left:89px;top:111px;" width="20" height="20" viewBox="0 0 20 20"><path d="M1.5,10.5 L1.5,18.7 L15,18.7 Z" fill="#3f9fd2"/><path d="M1.5,14 L1.5,18.7 L9,18.7 Z" fill="#7cc4ea"/><circle cx="8.2" cy="8" r="4.1" fill="#ececec" stroke="#3a3a3a" stroke-width="1.1"/><circle cx="7.2" cy="7" r="1.6" fill="#fff"/><path d="M8,12.4 L12.5,18.6 M10.5,11.5 L15,17.2 M12.1,9.6 L15.5,14 M5.6,12.4 L9.6,18.7" stroke="#222" stroke-width="1.15"/></svg>
<span class="t" style="left:112.50px;top:114.00px;font-size:12px;line-height:16px;letter-spacing:-0.072px;color:#000;">Directional6</span>
<svg style="left:89px;top:133px;" width="20" height="20" viewBox="0 0 20 20"><path d="M1.5,10.5 L1.5,18.7 L15,18.7 Z" fill="#3f9fd2"/><path d="M1.5,14 L1.5,18.7 L9,18.7 Z" fill="#7cc4ea"/><circle cx="8.2" cy="8" r="4.1" fill="#ececec" stroke="#3a3a3a" stroke-width="1.1"/><circle cx="7.2" cy="7" r="1.6" fill="#fff"/><path d="M8,12.4 L12.5,18.6 M10.5,11.5 L15,17.2 M12.1,9.6 L15.5,14 M5.6,12.4 L9.6,18.7" stroke="#222" stroke-width="1.15"/></svg>
<span class="t" style="left:112.50px;top:136.00px;font-size:12px;line-height:16px;letter-spacing:-0.072px;color:#000;">Directional7</span>
<svg style="left:89px;top:155px;" width="20" height="20" viewBox="0 0 20 20"><path d="M1.5,10.5 L1.5,18.7 L15,18.7 Z" fill="#3f9fd2"/><path d="M1.5,14 L1.5,18.7 L9,18.7 Z" fill="#7cc4ea"/><circle cx="8.2" cy="8" r="4.1" fill="#ececec" stroke="#3a3a3a" stroke-width="1.1"/><circle cx="7.2" cy="7" r="1.6" fill="#fff"/><path d="M8,12.4 L12.5,18.6 M10.5,11.5 L15,17.2 M12.1,9.6 L15.5,14 M5.6,12.4 L9.6,18.7" stroke="#222" stroke-width="1.15"/></svg>
<span class="t" style="left:112.50px;top:158.00px;font-size:12px;line-height:16px;letter-spacing:-0.072px;color:#000;">Directional8</span>
<svg style="left:69px;top:181px;" width="20" height="20" viewBox="0 0 20 20"><path d="M3.2,2.6 Q6.5,0.8 9.8,2.6" fill="none" stroke="#c4c4c4" stroke-width="1.3"/><path d="M2.8,4.4 Q6.5,2.6 10.2,4.4" fill="none" stroke="#d4d4d4" stroke-width="1.1"/><path d="M2.3,7 Q6.5,4 10.7,7 Q11.1,13.2 6.5,13.4 Q1.9,13.2 2.3,7 Z" fill="#f4f4f4" stroke="#333" stroke-width="1.1"/></svg>
<span class="t" style="left:89.50px;top:180.00px;font-size:12px;line-height:16px;letter-spacing:-0.215px;color:#000;">Gravity</span>
<svg style="left:67px;top:199px;" width="20" height="20" viewBox="0 0 20 20"><rect x="5.4" y="1.6" width="4.2" height="5.6" rx="0.9" fill="#e8e8e8" stroke="#333" stroke-width="0.9"/><path d="M7.5,7.2 V9.4" stroke="#333" stroke-width="1.1"/><path d="M2,13.7 Q2,9.3 7.6,9.3 Q11.4,9.3 14.4,13.5 Q11.4,18.3 7.6,18.3 Q2,18.3 2,13.7 Z" fill="#dcdcdc" stroke="#333" stroke-width="1"/><circle cx="7.1" cy="13.7" r="2" fill="#fff" stroke="#333" stroke-width="1.3"/></svg>
<span class="t" style="left:89.50px;top:202.00px;font-size:12px;line-height:16px;letter-spacing:-0.145px;color:#000;">Solid Body Contact12</span>
<svg style="left:67px;top:221px;" width="20" height="20" viewBox="0 0 20 20"><rect x="5.4" y="1.6" width="4.2" height="5.6" rx="0.9" fill="#e8e8e8" stroke="#333" stroke-width="0.9"/><path d="M7.5,7.2 V9.4" stroke="#333" stroke-width="1.1"/><path d="M2,13.7 Q2,9.3 7.6,9.3 Q11.4,9.3 14.4,13.5 Q11.4,18.3 7.6,18.3 Q2,18.3 2,13.7 Z" fill="#dcdcdc" stroke="#333" stroke-width="1"/><circle cx="7.1" cy="13.7" r="2" fill="#fff" stroke="#333" stroke-width="1.3"/></svg>
<span class="t" style="left:89.50px;top:224.00px;font-size:12px;line-height:16px;letter-spacing:-0.145px;color:#000;">Solid Body Contact13</span>
<svg style="left:67px;top:243px;" width="20" height="20" viewBox="0 0 20 20"><rect x="5.4" y="1.6" width="4.2" height="5.6" rx="0.9" fill="#e8e8e8" stroke="#333" stroke-width="0.9"/><path d="M7.5,7.2 V9.4" stroke="#333" stroke-width="1.1"/><path d="M2,13.7 Q2,9.3 7.6,9.3 Q11.4,9.3 14.4,13.5 Q11.4,18.3 7.6,18.3 Q2,18.3 2,13.7 Z" fill="#dcdcdc" stroke="#333" stroke-width="1"/><circle cx="7.1" cy="13.7" r="2" fill="#fff" stroke="#333" stroke-width="1.3"/></svg>
<span class="t" style="left:89.50px;top:246.00px;font-size:12px;line-height:16px;letter-spacing:-0.145px;color:#000;">Solid Body Contact14</span>
<svg style="left:67px;top:265px;" width="20" height="20" viewBox="0 0 20 20"><rect x="5.4" y="1.6" width="4.2" height="5.6" rx="0.9" fill="#e8e8e8" stroke="#333" stroke-width="0.9"/><path d="M7.5,7.2 V9.4" stroke="#333" stroke-width="1.1"/><path d="M2,13.7 Q2,9.3 7.6,9.3 Q11.4,9.3 14.4,13.5 Q11.4,18.3 7.6,18.3 Q2,18.3 2,13.7 Z" fill="#dcdcdc" stroke="#333" stroke-width="1"/><circle cx="7.1" cy="13.7" r="2" fill="#fff" stroke="#333" stroke-width="1.3"/></svg>
<span class="t" style="left:89.50px;top:268.00px;font-size:12px;line-height:16px;letter-spacing:-0.145px;color:#000;">Solid Body Contact15</span>
</div>
<div style="left:3px;top:988px;width:230px;height:17px;background:#d0d0d0;"></div>
<div style="left:238px;top:988px;width:1679px;height:17px;background:#f0f0f0;"></div>
<div style="left:255px;top:989.5px;width:64px;height:14.5px;background:#cdcdcd;"></div>
<svg style="left:242px;top:991px;" width="8" height="11" viewBox="0 0 8 11"><path d="M6.4,1.6 L2,5.5 L6.4,9.4" fill="none" stroke="#444" stroke-width="1.7"/></svg>
<svg style="left:1904px;top:991px;" width="8" height="11" viewBox="0 0 8 11"><path d="M1.6,1.6 L6,5.5 L1.6,9.4" fill="none" stroke="#444" stroke-width="1.7"/></svg>
<div style="left:0px;top:1005px;width:1920px;height:1px;background:#9a9a9a;"></div>
<div style="left:3px;top:1005px;width:63px;height:1.4px;background:#222;"></div>
<div style="left:3px;top:1006px;width:63px;height:15.5px;background:#bdbdbd;"></div>
<div style="left:3.0px;top:1006px;width:1px;height:15.5px;background:#a4a4a4;"></div>
<div style="left:18.5px;top:1006px;width:1px;height:15.5px;background:#a4a4a4;"></div>
<div style="left:34.0px;top:1006px;width:1px;height:15.5px;background:#a4a4a4;"></div>
<div style="left:49.5px;top:1006px;width:1px;height:15.5px;background:#a4a4a4;"></div>
<svg style="left:3px;top:1006px;" width="62" height="15" viewBox="0 0 62 15"><g fill="#a6a6a6"><path d="M6,3 v9 h1.6 v-9 Z M13,3 L8,7.5 L13,12 Z"/><path d="M28,3 L22,7.5 L28,12 Z"/><path d="M35,3 L41,7.5 L35,12 Z"/><path d="M49,3 L54,7.5 L49,12 Z M54.4,3 v9 h1.6 v-9 Z"/></g></svg>
<div style="left:66px;top:1006px;width:639px;height:15.5px;background:#d6d6d6;"></div>
<div style="left:483px;top:1006px;width:40px;height:16.5px;background:#fbfbfb;"></div>
<span class="t" style="left:81.00px;top:1005.00px;font-size:12px;line-height:16px;letter-spacing:0.164px;color:#000;">Model</span>
<div style="left:123.0px;top:1006px;width:1.2px;height:15.5px;background:#8e8e8e;"></div>
<span class="t" style="left:134.00px;top:1005.00px;font-size:12px;line-height:16px;letter-spacing:-0.433px;color:#000;">3D Views</span>
<div style="left:190.5px;top:1006px;width:1.2px;height:15.5px;background:#8e8e8e;"></div>
<span class="t" style="left:201.00px;top:1005.00px;font-size:12px;line-height:16px;letter-spacing:0.137px;color:#000;">Middle Stump</span>
<div style="left:284.5px;top:1006px;width:1.2px;height:15.5px;background:#8e8e8e;"></div>
<span class="t" style="left:295.00px;top:1005.00px;font-size:12px;line-height:16px;letter-spacing:-0.044px;color:#000;">Angled View</span>
<div style="left:371.0px;top:1006px;width:1.2px;height:15.5px;background:#8e8e8e;"></div>
<span class="t" style="left:382.00px;top:1005.00px;font-size:12px;line-height:16px;letter-spacing:-0.247px;color:#000;">Down the Crease</span>
<div style="left:482.0px;top:1006px;width:1.2px;height:15.5px;background:#8e8e8e;"></div>
<span class="t" style="left:532.00px;top:1005.00px;font-size:12px;line-height:16px;letter-spacing:-0.269px;color:#000;">Ultra Edge</span>
<div style="left:596.0px;top:1006px;width:1.2px;height:15.5px;background:#8e8e8e;"></div>
<span class="t" style="left:606.00px;top:1005.00px;font-size:12px;line-height:16px;letter-spacing:0.069px;color:#000;">Motion Study 1</span>
<div style="left:704.0px;top:1006px;width:1.2px;height:15.5px;background:#8e8e8e;"></div>
<div style="left:522px;top:1006px;width:1.2px;height:15.5px;background:#8e8e8e;"></div>
<span class="t" style="left:489.00px;top:1005.00px;font-size:12px;line-height:16px;letter-spacing:-0.499px;color:#000;font-weight:bold;">Spin</span>
<div style="left:0px;top:1021.3px;width:483px;height:1.2px;background:#8e8e8e;"></div>
<div style="left:523px;top:1021.3px;width:1397px;height:1.2px;background:#8e8e8e;"></div>
<div style="left:0px;top:1022.5px;width:1920px;height:17.5px;background:#fafafa;"></div>
<span class="t" style="left:1.50px;top:1023.50px;font-size:12px;line-height:16px;letter-spacing:-0.985px;color:#000;">SOLIDWORKS</span>
<span class="t" style="left:1495.00px;top:1023.50px;font-size:12px;line-height:16px;letter-spacing:-0.106px;color:#000;">Under Defined</span>
<span class="t" style="left:1589.00px;top:1023.50px;font-size:12px;line-height:16px;letter-spacing:-0.023px;color:#000;">Editing Assembly</span>
<svg style="left:1704px;top:1025px;" width="9" height="14" viewBox="0 0 9 14"><rect x="1" y="0.6" width="7" height="12.6" rx="3" fill="#3a3a3a"/><circle cx="4.5" cy="4" r="2" fill="#ff2a1a"/><circle cx="4.5" cy="9.6" r="2" fill="#22aa22"/></svg>
<div style="left:1718px;top:1024px;width:1px;height:15px;background:#d0d0d0;"></div>
<span class="t" style="left:1811.00px;top:1023.50px;font-size:12px;line-height:16px;letter-spacing:0.110px;color:#000;">Custom</span>
<svg style="left:1867px;top:1029px;" width="8" height="5" viewBox="0 0 8 5"><path d="M0.6,4.4 L7.4,4.4 L4,0.6 Z" fill="#333"/></svg>
<svg style="left:1899px;top:1024px;" width="19" height="16" viewBox="0 0 19 16"><path d="M2,7 L12,1.6 L17.6,6.4 L8,12.4 Z" fill="#f0f0f0" stroke="#333" stroke-width="1.1"/><path d="M2,7 L2,9.6 L8,15 L17.6,9 L17.6,6.4" fill="#ddd" stroke="#333" stroke-width="1"/><circle cx="10" cy="7" r="2.2" fill="#fff" stroke="#333" stroke-width="0.9"/></svg>
</div></body></html>
